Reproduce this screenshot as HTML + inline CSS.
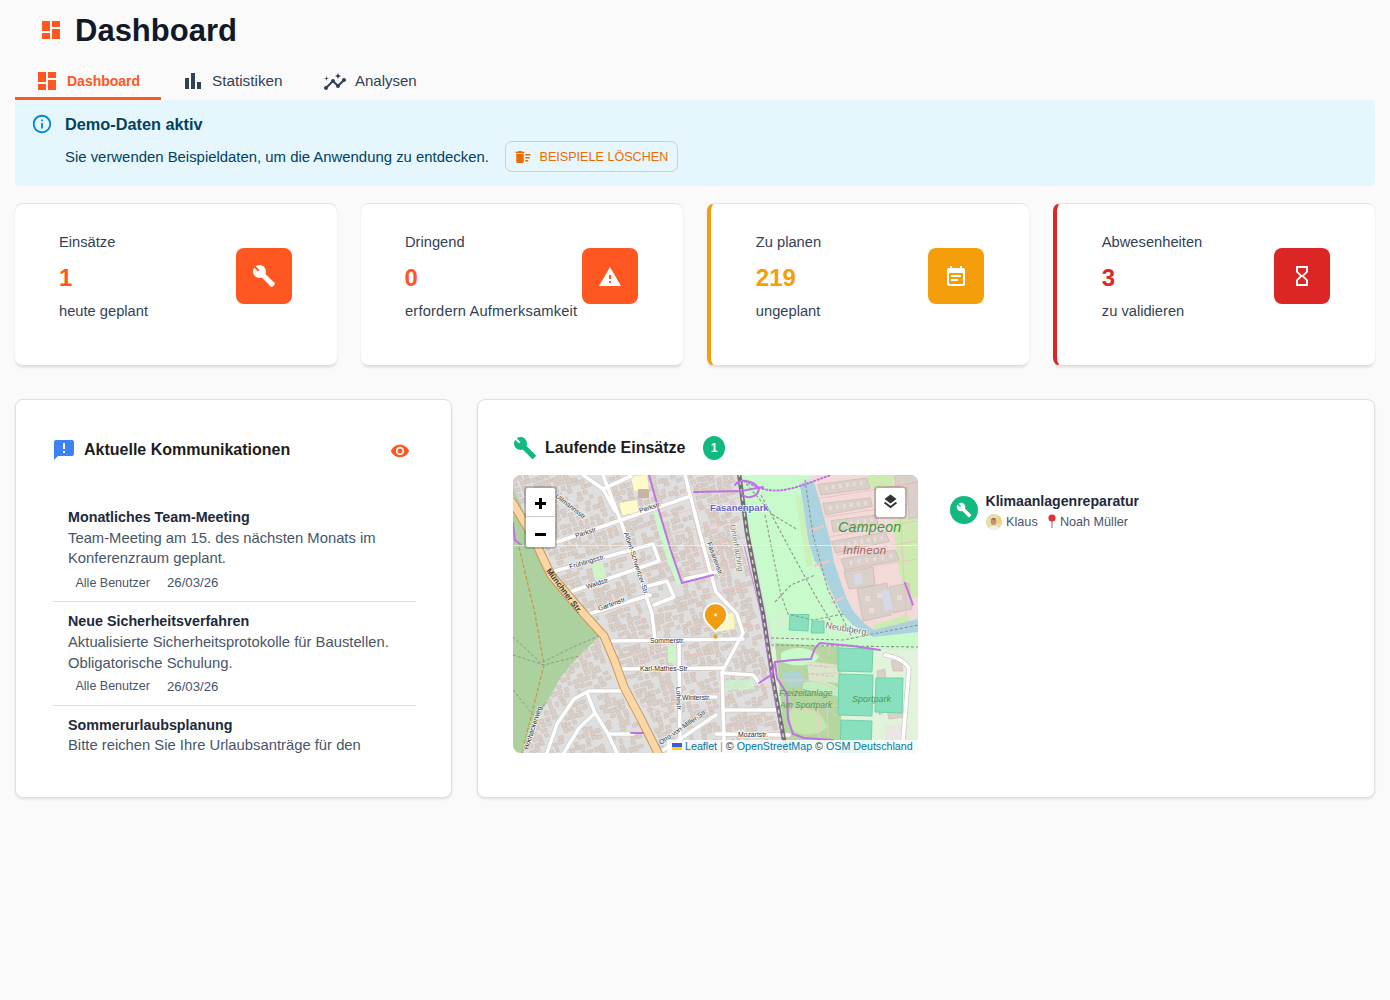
<!DOCTYPE html>
<html><head><meta charset="utf-8">
<style>
*{box-sizing:border-box;margin:0;padding:0}
html,body{width:1390px;height:1000px;overflow:hidden;background:#fafafa;font-family:"Liberation Sans",sans-serif}
.a{position:absolute;white-space:nowrap;line-height:1}
svg{display:block}
.card{position:absolute;background:#fff;border-radius:8px;border-top:1px solid #e2e5ea;border-bottom:1px solid #d9dce1;box-shadow:0 1.5px 2.5px rgba(0,0,0,0.06),0 2px 2px rgba(0,0,0,0.03)}
.card2{position:absolute;background:#fff;border:1px solid #dcdfe4;border-radius:8px;box-shadow:0 1px 3px rgba(0,0,0,0.07),0 2px 2px rgba(0,0,0,0.03)}
.lbl{font-size:14.7px;color:#334155}
.num{font-size:24px;font-weight:bold}
.ibox{position:absolute;width:56px;height:56px;border-radius:8px}
.t14{font-size:14.3px;font-weight:bold;color:#1e293b}
.d14{font-size:14.8px;color:#475569}
.m12{font-size:12.5px;color:#475569}
</style></head>
<body>
<!-- HEADER -->
<svg class="a" style="left:39px;top:18px" width="24" height="24" viewBox="0 0 24 24"><path fill="#ff5722" d="M3 13h8V3H3zm0 8h8v-6H3zm10 0h8V11h-8zm0-18v6h8V3z"/></svg>
<div class="a" style="left:75px;top:14.8px;font-size:31px;font-weight:bold;color:#111827">Dashboard</div>

<!-- TABS -->
<svg class="a" style="left:35px;top:69px" width="24" height="24" viewBox="0 0 24 24"><path fill="#ff5722" d="M3 13h8V3H3zm0 8h8v-6H3zm10 0h8V11h-8zm0-18v6h8V3z"/></svg>
<div class="a" style="left:67px;top:74px;font-size:14px;font-weight:bold;color:#ff5722">Dashboard</div>
<div class="a" style="left:15px;top:97px;width:146px;height:3px;background:#ff5722"></div>
<svg class="a" style="left:181px;top:69px" width="24" height="24" viewBox="0 0 24 24"><path fill="#334155" d="M4 9h4v11H4zm12 4h4v7h-4zm-6-9h4v16h-4z"/></svg>
<div class="a" style="left:212px;top:72.7px;font-size:15.3px;color:#334155">Statistiken</div>
<svg class="a" style="left:323px;top:69.5px" width="24" height="24" viewBox="0 0 24 24"><path fill="#334155" d="M21 8c-1.45 0-2.26 1.44-1.93 2.51l-3.55 3.56c-.3-.09-.74-.09-1.04 0l-2.55-2.55C12.27 10.45 11.46 9 10 9c-1.45 0-2.27 1.44-1.93 2.52l-4.56 4.55C2.44 15.74 1 16.55 1 18c0 1.1.9 2 2 2 1.45 0 2.26-1.44 1.93-2.51l4.55-4.56c.3.09.74.09 1.04 0l2.55 2.55C12.73 16.55 13.54 18 15 18c1.45 0 2.27-1.44 1.93-2.52l3.56-3.55c1.07.33 2.51-.48 2.51-1.93 0-1.1-.9-2-2-2"/><path fill="#334155" d="m15 9 .94-2.07L18 6l-2.06-.93L15 3l-.92 2.07L12 6l2.08.93zM3.5 11 4 9l2-.5L4 8l-.5-2L3 8l-2 .5L3 9z"/></svg>
<div class="a" style="left:355px;top:72.8px;font-size:15px;color:#334155">Analysen</div>

<!-- ALERT -->
<div class="a" style="left:15px;top:100px;width:1360px;height:86px;background:#e5f6fd;border-radius:4px"></div>
<svg class="a" style="left:31px;top:113px" width="22" height="22" viewBox="0 0 24 24"><path fill="#0288d1" d="M11 7h2v2h-2zm0 4h2v6h-2zm1-9C6.48 2 2 6.48 2 12s4.48 10 10 10 10-4.48 10-10S17.52 2 12 2m0 18c-4.41 0-8-3.59-8-8s3.59-8 8-8 8 3.59 8 8-3.59 8-8 8"/></svg>
<div class="a" style="left:65px;top:116px;font-size:16.3px;font-weight:bold;color:#014361">Demo-Daten aktiv</div>
<div class="a" style="left:65px;top:150px;font-size:14.9px;color:#014361">Sie verwenden Beispieldaten, um die Anwendung zu entdecken.</div>
<div class="a" style="left:505.2px;top:141.4px;width:172.6px;height:31px;border:1.2px solid rgba(237,108,2,0.33);border-radius:7px"></div>
<svg class="a" style="left:513.5px;top:148px" width="18" height="18" viewBox="0 0 24 24"><path fill="#ed6c02" d="M15 16h4v2h-4zm0-8h7v2h-7zm0 4h6v2h-6zM3 18c0 1.1.9 2 2 2h6c1.1 0 2-.9 2-2V8H3zM14 5h-3l-1-1H6L5 5H2v2h12z"/></svg>
<div class="a" style="left:539.5px;top:150.8px;font-size:12.6px;color:#ed6c02">BEISPIELE LÖSCHEN</div>

<!-- STAT CARDS -->
<div class="card" style="left:15px;top:203px;width:322px;height:163px"></div>
<div class="a lbl" style="left:59px;top:234.5px">Einsätze</div>
<div class="a num" style="left:59px;top:266.4px;color:#ff5722">1</div>
<div class="a lbl" style="left:59px;top:304px">heute geplant</div>
<div class="ibox" style="left:236px;top:248.4px;background:#ff5722"></div>

<div class="card" style="left:361px;top:203px;width:322px;height:163px"></div>
<div class="a lbl" style="left:405px;top:234.5px">Dringend</div>
<div class="a num" style="left:404.5px;top:266.4px;color:#ff5722">0</div>
<div class="a lbl" style="left:405px;top:304px;letter-spacing:0.17px">erfordern Aufmerksamkeit</div>
<div class="ibox" style="left:582px;top:248.4px;background:#ff5722"></div>

<div class="card" style="left:707px;top:203px;width:322px;height:163px;border-left:4px solid #f59e0b"></div>
<div class="a lbl" style="left:755.8px;top:234.5px">Zu planen</div>
<div class="a num" style="left:755.8px;top:266.4px;color:#f59e0b">219</div>
<div class="a lbl" style="left:755.8px;top:304px">ungeplant</div>
<div class="ibox" style="left:928px;top:248.4px;background:#f59e0b"></div>

<div class="card" style="left:1053px;top:203px;width:322px;height:163px;border-left:4px solid #dc2626"></div>
<div class="a lbl" style="left:1101.8px;top:234.5px">Abwesenheiten</div>
<div class="a num" style="left:1101.8px;top:266.4px;color:#dc2626">3</div>
<div class="a lbl" style="left:1101.8px;top:304px">zu validieren</div>
<div class="ibox" style="left:1274px;top:248.4px;background:#dc2626"></div>

<!-- stat icons -->
<svg class="a" style="left:252px;top:264.4px" width="24" height="24" viewBox="0 0 24 24"><path fill="#fff" d="m22.61 18.99-9.08-9.08c.93-2.34.45-5.1-1.44-7C9.79.61 6.21.4 3.66 2.26L7.5 6.11 6.08 7.52 2.25 3.69C.39 6.23.6 9.82 2.9 12.11c1.86 1.86 4.57 2.35 6.89 1.48l9.11 9.11c.39.39 1.02.39 1.41 0l2.3-2.3c.4-.38.4-1.01 0-1.41"/></svg>
<svg class="a" style="left:598px;top:265.4px" width="24" height="24" viewBox="0 0 24 24"><path fill="#fff" d="M1 21h22L12 2zm12-3h-2v-2h2zm0-4h-2v-4h2z"/></svg>
<svg class="a" style="left:943.6px;top:264.6px" width="24" height="24" viewBox="0 0 24 24"><path fill="#fff" d="M17 10H7v2h10zm2-7h-1V1h-2v2H8V1H6v2H5c-1.11 0-1.99.9-1.99 2L3 19c0 1.1.89 2 2 2h14c1.1 0 2-.9 2-2V5c0-1.1-.9-2-2-2m0 16H5V8h14zm-5-5H7v2h7z"/></svg>
<svg class="a" style="left:1290px;top:264.4px" width="24" height="24" viewBox="0 0 24 24"><path fill="#fff" d="M6 2v6h.01L6 8.01 10 12l-4 4 .01.01H6V22h12v-5.99h-.01L18 16l-4-4 4-3.99-.01-.01H18V2zm10 14.5V20H8v-3.5l4-4zm-4-5-4-4V4h8v3.5z"/></svg>

<!-- COMMUNICATIONS CARD -->
<div class="card2" style="left:15px;top:399px;width:437px;height:399px"></div>
<svg class="a" style="left:52px;top:438px" width="24" height="24" viewBox="0 0 24 24"><path fill="#3b82f6" d="M20 2H4c-1.1 0-1.99.9-1.99 2L2 22l4-4h14c1.1 0 2-.9 2-2V4c0-1.1-.9-2-2-2m-7 9h-2V5h2zm0 4h-2v-2h2z"/></svg>
<div class="a" style="left:84px;top:442px;font-size:16px;font-weight:bold;color:#1c1c1c">Aktuelle Kommunikationen</div>
<svg class="a" style="left:390.4px;top:440.9px" width="20" height="20" viewBox="0 0 24 24"><path fill="#ff5722" d="M12 4.5C7 4.5 2.73 7.61 1 12c1.73 4.39 6 7.5 11 7.5s9.27-3.11 11-7.5c-1.73-4.39-6-7.5-11-7.5M12 17c-2.76 0-5-2.24-5-5s2.24-5 5-5 5 2.24 5 5-2.24 5-5 5m0-8c-1.66 0-3 1.34-3 3s1.34 3 3 3 3-1.34 3-3-1.34-3-3-3"/></svg>

<div class="a t14" style="left:68px;top:510px">Monatliches Team-Meeting</div>
<div class="a d14" style="left:68px;top:530.6px">Team-Meeting am 15. des nächsten Monats im</div>
<div class="a d14" style="left:68px;top:551.4px">Konferenzraum geplant.</div>
<div class="a m12" style="left:75.5px;top:576.7px">Alle Benutzer</div>
<div class="a m12" style="left:167px;top:576.2px;font-size:13.2px">26/03/26</div>
<div class="a" style="left:52px;top:601px;width:364px;height:1px;background:#e0e0e0"></div>

<div class="a t14" style="left:68px;top:614.2px">Neue Sicherheitsverfahren</div>
<div class="a d14" style="left:68px;top:635.1px">Aktualisierte Sicherheitsprotokolle für Baustellen.</div>
<div class="a d14" style="left:68px;top:655.6px">Obligatorische Schulung.</div>
<div class="a m12" style="left:75.5px;top:680.4px">Alle Benutzer</div>
<div class="a m12" style="left:167px;top:679.9px;font-size:13.2px">26/03/26</div>
<div class="a" style="left:52px;top:705px;width:364px;height:1px;background:#e0e0e0"></div>

<div class="a t14" style="left:68px;top:718px">Sommerurlaubsplanung</div>
<div class="a d14" style="left:68px;top:738.4px">Bitte reichen Sie Ihre Urlaubsanträge für den</div>

<!-- RUNNING JOBS CARD -->
<div class="card2" style="left:477px;top:399px;width:898px;height:399px"></div>
<svg class="a" style="left:513.2px;top:435.7px" width="24" height="24" viewBox="0 0 24 24"><path fill="#10b981" d="m22.61 18.99-9.08-9.08c.93-2.34.45-5.1-1.44-7C9.79.61 6.21.4 3.66 2.26L7.5 6.11 6.08 7.52 2.25 3.69C.39 6.23.6 9.82 2.9 12.11c1.86 1.86 4.57 2.35 6.89 1.48l9.11 9.11c.39.39 1.02.39 1.41 0l2.3-2.3c.4-.38.4-1.01 0-1.41"/></svg>
<div class="a" style="left:545px;top:439.5px;font-size:16px;font-weight:bold;color:#1c1c1c">Laufende Einsätze</div>
<div class="a" style="left:703px;top:435.5px;width:22px;height:24px;border-radius:11px/12px;background:#10b981;color:#fff;font-size:12px;font-weight:bold;text-align:center;line-height:24px">1</div>

<div id="map" class="a" style="left:513px;top:475px;width:405px;height:278px;border-radius:8px;overflow:hidden;background:#e0dfdf">
<svg width="405" height="278" viewBox="0 0 405 278" style="position:absolute;left:0;top:0">
<rect width="405" height="278" fill="#e0dfdf"/>
<path d="M299.0 0.0 L405.0 0.0 L405.0 144.0 L361.0 155.0 L352.0 149.0 L333.0 122.0 L326.0 102.0 L320.5 85.5 L317.4 66.5 L312.2 47.5 L307.4 28.5 L300.5 5.8 Z" fill="#f2dad9"/>
<path d="M354 0 L380 0 L380 10 L357 13 Z" fill="#cdebb0"/>
<path d="M380 46 L405 40 L405 122 L394 124 L386 96 Z" fill="#cdebb0"/>
<path d="M361 150 L395 139 L398 151 L362 159 Z" fill="#cdebb0"/>
<path d="M305 9.5 L353.5 2.9 L357 13.3 L308 20 Z" fill="#d9d0c9" stroke="#c9b8b0" stroke-width="0.7"/>
<path d="M309.8 28.5 L357.3 22.8 L359.2 31.4 L312.7 40 Z" fill="#d9d0c9" stroke="#c9b8b0" stroke-width="0.7"/>
<path d="M318.4 45.6 L363 40 L365 49.4 L320 57 Z" fill="#d9d0c9" stroke="#c9b8b0" stroke-width="0.7"/>
<path d="M318.4 66.5 L372.5 57 L376.4 66.5 L323 78 Z" fill="#d9d0c9" stroke="#c9b8b0" stroke-width="0.7"/>
<path d="M328 84 L382 75 L386 85 L332 95 Z" fill="#d9d0c9" stroke="#c9b8b0" stroke-width="0.7"/>
<path d="M331 97 L360 92 L362 110 L336 114 Z" fill="#d9d0c9" stroke="#c9b8b0" stroke-width="0.7"/>
<path d="M344 114 L374 108 L378 140 L350 146 Z" fill="#d9d0c9" stroke="#c9b8b0" stroke-width="0.7"/>
<path d="M376 112 L396 108 L399 134 L380 138 Z" fill="#d9d0c9" stroke="#c9b8b0" stroke-width="0.7"/>
<path d="M381 0 L405 0 L405 8 L383 11 Z" fill="#d9d0c9" stroke="#c9b8b0" stroke-width="0.7"/>
<path d="M394 9 L405 7 L405 42 L396 44 Z" fill="#d9d0c9" stroke="#c9b8b0" stroke-width="0.7"/>
<g fill="#f2dad9"><rect x="312.3" y="11.0" width="2.4" height="4" transform="rotate(-10 313.5 13.5)"/><rect x="319.3" y="10.0" width="2.4" height="4" transform="rotate(-10 320.5 12.5)"/><rect x="326.3" y="9.0" width="2.4" height="4" transform="rotate(-10 327.5 11.5)"/><rect x="333.3" y="8.0" width="2.4" height="4" transform="rotate(-10 334.5 10.5)"/><rect x="340.3" y="7.0" width="2.4" height="4" transform="rotate(-10 341.5 9.5)"/><rect x="347.3" y="6.0" width="2.4" height="4" transform="rotate(-10 348.5 8.5)"/><rect x="316.3" y="31.0" width="2.4" height="4" transform="rotate(-10 317.5 33.5)"/><rect x="323.3" y="30.0" width="2.4" height="4" transform="rotate(-10 324.5 32.5)"/><rect x="330.3" y="29.0" width="2.4" height="4" transform="rotate(-10 331.5 31.5)"/><rect x="337.3" y="28.0" width="2.4" height="4" transform="rotate(-10 338.5 30.5)"/><rect x="344.3" y="27.0" width="2.4" height="4" transform="rotate(-10 345.5 29.5)"/><rect x="351.3" y="26.0" width="2.4" height="4" transform="rotate(-10 352.5 28.5)"/><rect x="324.1" y="48.0" width="2.4" height="4" transform="rotate(-10 325.3 50.5)"/><rect x="330.8" y="47.0" width="2.4" height="4" transform="rotate(-10 332.0 49.5)"/><rect x="337.5" y="46.0" width="2.4" height="4" transform="rotate(-10 338.7 48.5)"/><rect x="344.1" y="45.0" width="2.4" height="4" transform="rotate(-10 345.3 47.5)"/><rect x="350.8" y="44.0" width="2.4" height="4" transform="rotate(-10 352.0 46.5)"/><rect x="357.5" y="43.0" width="2.4" height="4" transform="rotate(-10 358.7 45.5)"/><rect x="328.1" y="67.9" width="2.4" height="4" transform="rotate(-10 329.3 70.4)"/><rect x="334.7" y="66.8" width="2.4" height="4" transform="rotate(-10 335.9 69.3)"/><rect x="341.2" y="65.6" width="2.4" height="4" transform="rotate(-10 342.4 68.1)"/><rect x="347.8" y="64.5" width="2.4" height="4" transform="rotate(-10 349.0 67.0)"/><rect x="354.4" y="63.4" width="2.4" height="4" transform="rotate(-10 355.6 65.9)"/><rect x="360.9" y="62.2" width="2.4" height="4" transform="rotate(-10 362.1 64.7)"/><rect x="367.5" y="61.1" width="2.4" height="4" transform="rotate(-10 368.7 63.6)"/><rect x="336.8" y="85.8" width="2.4" height="4" transform="rotate(-10 338.0 88.3)"/><rect x="344.8" y="84.5" width="2.4" height="4" transform="rotate(-10 346.0 87.0)"/><rect x="352.8" y="83.2" width="2.4" height="4" transform="rotate(-10 354.0 85.7)"/><rect x="360.8" y="81.8" width="2.4" height="4" transform="rotate(-10 362.0 84.3)"/><rect x="368.8" y="80.5" width="2.4" height="4" transform="rotate(-10 370.0 83.0)"/><rect x="376.8" y="79.2" width="2.4" height="4" transform="rotate(-10 378.0 81.7)"/></g>
<g fill="#f2dad9"><rect x="352" y="121" width="5" height="5"/><rect x="364" y="118" width="5" height="5"/><rect x="356" y="133" width="5" height="5"/><rect x="384" y="120" width="5" height="5"/></g>
<path d="M340 100 L348 98 L350 108 L342 110 Z M368 116 L376 114 L380 134 L372 136 Z" fill="#d8d9e6"/>
<g stroke="#ecbcba" stroke-width="0.8" fill="none"><path d="M303 24 L400 8 M308 43 L402 28 M316 62 L404 46 M324 80 L404 66 M330 96 L404 84 M385 0 L393 140"/></g>
<path d="M0.0 12.0 L12.0 40.0 L30.0 80.0 L48.0 108.0 L66.0 130.0 L84.0 152.0 L88.0 160.0 L66.0 181.0 L48.0 202.0 L34.0 227.0 L19.0 256.0 L10.0 278.0 L0.0 278.0 Z" fill="#add19e"/>
<path d="M229.0 0.0 L300.0 0.0 L287.0 9.0 L295.0 44.0 L304.0 88.0 L320.0 125.0 L340.0 150.0 L360.0 162.0 L405.0 157.0 L405.0 175.0 L262.0 172.0 L254.0 139.0 L237.0 58.0 Z" fill="#c8facc"/>
<path d="M282 20 L289 22 L300 90 L294 92 Z" fill="#cdebb0" opacity="0.7"/>
<path d="M286.7 8.8 L300.5 5.8 L307.4 28.5 L312.2 47.5 L317.4 66.5 L320.5 85.5 L326.0 102.0 L333.0 122.0 L340.0 136.0 L352.0 149.0 L361.0 155.0 L405.0 144.0 L405.0 157.0 L360.0 162.0 L340.0 150.0 L329.0 139.0 L319.0 118.0 L307.0 92.0 L301.3 85.5 L295.6 66.5 L292.7 47.5 L290.0 28.5 Z" fill="#aad3df"/>
<path d="M296 56 L311 51 M301 91 L316 86 M318 128 L331 122" stroke="#f2c6c4" stroke-width="2"/>
<path d="M258 172 L405 175 L405 278 L272 278 Z" fill="#e2f3dc"/>
<path d="M262 168 L328 172 L328 266 L272 270 Z" fill="#b5d6a1"/>
<path d="M268 178 C280 170 300 172 306 182 C300 192 278 193 268 186 Z" fill="#c8facc"/>
<path d="M270 198 C282 194 290 196 292 206 C288 214 274 214 270 205 Z" fill="#aad3df" opacity="0.8"/>
<path d="M276 236 C292 228 310 236 314 252 C305 262 284 262 278 252 Z" fill="#c8e8b0" opacity="0.9"/>
<path d="M290 208 C300 204 318 206 326 214 L326 222 C314 218 300 216 290 214 Z" fill="#c8facc" opacity="0.7"/>
<path d="M294 186 L326 190 L326 208 L296 206 Z" fill="#d9e6c9"/>
<g stroke="#f0c8c6" stroke-width="1" fill="none"><path d="M262 205 L290 205 C305 206 318 212 326 216"/><path d="M276 232 C290 236 300 238 305 232 L326 230"/><path d="M305 232 L306 263 M314 231 L315 263 M320 240 L326 240 M295 199 L328 198 M300 191 L326 192"/><path d="M300 172 C306 176 306 182 310 186 M318 168 L315 180"/></g>
<g fill="#e3c9c6"><rect x="296" y="189" width="3" height="2"/><rect x="301" y="190" width="3" height="2"/><rect x="306" y="190" width="3" height="2"/><rect x="311" y="191" width="3" height="2"/><rect x="298" y="198" width="3" height="2"/><rect x="303" y="199" width="3" height="2"/><rect x="308" y="199" width="3" height="2"/><rect x="313" y="200" width="3" height="2"/><rect x="318" y="200" width="3" height="2"/></g>
<path d="M364 196 L372 194 L374 236 L366 240 Z M374 236 L392 234 L392 242 L376 244 Z M378 186 L388 184 L390 196 L380 196 Z" fill="#d9d0c9" stroke="#c9b8b0" stroke-width="0.6"/>
<rect x="372" y="250" width="22" height="18" fill="#eae6e2"/>
<g fill="#88e0be" stroke="#6dd3a9" stroke-width="1">
<path d="M277 139.5 L296 139.5 L295 156 L276 155 Z"/>
<path d="M299 146 L311 146 L311 158 L298 158 Z"/>
<path d="M325 173 L360 174 L359 197 L325 196 Z"/>
<path d="M326 199 L360 200 L359 241 L325 240 Z"/>
<path d="M363 203 L390 203 L389 238 L362 237 Z"/>
<path d="M328 245 L359 246 L358 278 L327 278 Z"/>
</g>
<path d="M262 139 L276 140 L275 155 L262 156 Z" fill="#d7f0d0" opacity="0.6"/>
<g fill="#d9d0c9" stroke="#c8b9ae" stroke-width="0.5">
<rect x="-2.6" y="-1.8" width="5.3" height="3.7" transform="translate(17.0 271.4) rotate(-17)"/>
<rect x="-2.2" y="-1.8" width="4.4" height="3.5" transform="translate(19.9 277.1) rotate(-17)"/>
<rect x="-2.8" y="-1.5" width="5.7" height="2.9" transform="translate(20.4 259.1) rotate(-17)"/>
<rect x="-2.0" y="-1.9" width="4.0" height="3.9" transform="translate(21.6 264.4) rotate(-20)"/>
<rect x="-2.4" y="-1.5" width="4.7" height="3.0" transform="translate(24.3 270.1) rotate(-17)"/>
<rect x="-2.0" y="-2.2" width="4.0" height="4.3" transform="translate(24.6 274.2) rotate(-17)"/>
<rect x="-2.6" y="-1.9" width="5.2" height="3.8" transform="translate(24.7 252.2) rotate(73)"/>
<rect x="-2.6" y="-1.8" width="5.3" height="3.5" transform="translate(26.8 262.6) rotate(73)"/>
<rect x="-2.3" y="-2.0" width="4.7" height="3.9" transform="translate(28.9 267.7) rotate(73)"/>
<rect x="-2.5" y="-1.7" width="4.9" height="3.5" transform="translate(28.2 246.0) rotate(-17)"/>
<rect x="-2.0" y="-2.1" width="4.0" height="4.2" transform="translate(30.7 249.9) rotate(-15)"/>
<rect x="-3.0" y="-1.6" width="5.9" height="3.1" transform="translate(31.2 255.6) rotate(-15)"/>
<rect x="-2.0" y="-1.4" width="4.0" height="2.8" transform="translate(33.6 260.4) rotate(-17)"/>
<rect x="-1.9" y="-1.6" width="3.7" height="3.2" transform="translate(38.5 276.7) rotate(-17)"/>
<rect x="-1.9" y="-2.1" width="3.8" height="4.1" transform="translate(33.3 238.1) rotate(73)"/>
<rect x="-2.1" y="-1.4" width="4.3" height="2.9" transform="translate(34.6 243.9) rotate(-22)"/>
<rect x="-3.0" y="-1.7" width="5.9" height="3.4" transform="translate(36.2 248.0) rotate(73)"/>
<rect x="-1.9" y="-1.6" width="3.9" height="3.2" transform="translate(42.3 270.0) rotate(-17)"/>
<rect x="-2.0" y="-1.4" width="4.0" height="2.8" transform="translate(44.5 274.9) rotate(73)"/>
<rect x="-2.7" y="-1.5" width="5.4" height="3.1" transform="translate(35.4 226.4) rotate(-17)"/>
<rect x="-2.7" y="-1.7" width="5.3" height="3.3" transform="translate(37.7 231.3) rotate(73)"/>
<rect x="-2.6" y="-2.0" width="5.2" height="4.0" transform="translate(39.9 236.8) rotate(-17)"/>
<rect x="-2.7" y="-1.6" width="5.4" height="3.3" transform="translate(41.9 241.9) rotate(-17)"/>
<rect x="-2.3" y="-1.6" width="4.7" height="3.2" transform="translate(48.0 262.5) rotate(-17)"/>
<rect x="-2.7" y="-1.9" width="5.4" height="3.8" transform="translate(48.0 266.9) rotate(-20)"/>
<rect x="-2.9" y="-1.9" width="5.9" height="3.9" transform="translate(41.1 219.5) rotate(-17)"/>
<rect x="-2.3" y="-1.4" width="4.6" height="2.9" transform="translate(44.0 229.2) rotate(73)"/>
<rect x="-2.4" y="-2.2" width="4.8" height="4.4" transform="translate(51.0 250.2) rotate(-10)"/>
<rect x="-2.7" y="-2.0" width="5.3" height="3.9" transform="translate(52.6 255.1) rotate(73)"/>
<rect x="-2.2" y="-2.0" width="4.4" height="3.9" transform="translate(59.1 275.9) rotate(-17)"/>
<rect x="-2.2" y="-1.6" width="4.4" height="3.1" transform="translate(45.7 211.9) rotate(-17)"/>
<rect x="-1.9" y="-2.1" width="3.8" height="4.1" transform="translate(47.4 217.1) rotate(-17)"/>
<rect x="-2.1" y="-2.2" width="4.2" height="4.4" transform="translate(47.9 223.0) rotate(-17)"/>
<rect x="-2.9" y="-2.1" width="5.9" height="4.2" transform="translate(50.7 227.6) rotate(73)"/>
<rect x="-2.6" y="-1.7" width="5.2" height="3.4" transform="translate(54.5 243.3) rotate(-17)"/>
<rect x="-2.3" y="-1.4" width="4.5" height="2.8" transform="translate(55.2 249.1) rotate(-17)"/>
<rect x="-2.6" y="-1.4" width="5.2" height="2.9" transform="translate(57.8 253.8) rotate(-17)"/>
<rect x="-1.7" y="-1.9" width="3.5" height="3.7" transform="translate(63.2 269.2) rotate(-11)"/>
<rect x="-1.8" y="-1.7" width="3.6" height="3.3" transform="translate(63.9 273.4) rotate(-13)"/>
<rect x="-2.0" y="-2.0" width="4.0" height="4.0" transform="translate(50.0 205.0) rotate(-17)"/>
<rect x="-1.8" y="-2.0" width="3.6" height="3.9" transform="translate(53.5 214.4) rotate(73)"/>
<rect x="-2.5" y="-1.9" width="4.9" height="3.8" transform="translate(53.9 220.1) rotate(-11)"/>
<rect x="-2.5" y="-2.2" width="4.9" height="4.4" transform="translate(58.3 237.0) rotate(-17)"/>
<rect x="-2.8" y="-1.8" width="5.5" height="3.6" transform="translate(60.8 241.4) rotate(-18)"/>
<rect x="-1.9" y="-1.8" width="3.8" height="3.6" transform="translate(61.6 247.1) rotate(-17)"/>
<rect x="-2.9" y="-1.7" width="5.8" height="3.4" transform="translate(67.6 261.9) rotate(-16)"/>
<rect x="-2.6" y="-2.0" width="5.2" height="3.9" transform="translate(69.4 272.1) rotate(-17)"/>
<rect x="-1.8" y="-2.0" width="3.5" height="4.0" transform="translate(70.7 277.7) rotate(-17)"/>
<rect x="-2.0" y="-1.8" width="3.9" height="3.6" transform="translate(54.8 198.5) rotate(-17)"/>
<rect x="-1.7" y="-1.6" width="3.4" height="3.2" transform="translate(54.9 203.4) rotate(-13)"/>
<rect x="-2.1" y="-1.5" width="4.3" height="2.9" transform="translate(57.0 208.5) rotate(-17)"/>
<rect x="-2.7" y="-1.7" width="5.3" height="3.3" transform="translate(62.6 229.5) rotate(-17)"/>
<rect x="-2.3" y="-2.0" width="4.5" height="4.1" transform="translate(65.7 234.3) rotate(-12)"/>
<rect x="-3.0" y="-2.0" width="6.0" height="3.9" transform="translate(67.0 239.7) rotate(-18)"/>
<rect x="-2.1" y="-1.9" width="4.1" height="3.8" transform="translate(71.8 254.3) rotate(-17)"/>
<rect x="-2.3" y="-2.1" width="4.7" height="4.2" transform="translate(72.7 259.9) rotate(-17)"/>
<rect x="-2.0" y="-1.9" width="4.0" height="3.9" transform="translate(75.2 265.3) rotate(-16)"/>
<rect x="-1.8" y="-1.5" width="3.6" height="3.0" transform="translate(75.9 269.9) rotate(-17)"/>
<rect x="-2.7" y="-1.6" width="5.5" height="3.1" transform="translate(77.1 276.3) rotate(-17)"/>
<rect x="-2.6" y="-1.8" width="5.1" height="3.5" transform="translate(0.7 5.1) rotate(-20)"/>
<rect x="-2.5" y="-1.5" width="5.0" height="3.0" transform="translate(1.9 10.0) rotate(-17)"/>
<rect x="-2.8" y="-1.9" width="5.6" height="3.7" transform="translate(4.1 15.1) rotate(-17)"/>
<rect x="-2.5" y="-1.5" width="4.9" height="3.0" transform="translate(5.8 20.8) rotate(-17)"/>
<rect x="-2.0" y="-1.8" width="4.1" height="3.6" transform="translate(8.8 26.2) rotate(-17)"/>
<rect x="-2.1" y="-1.9" width="4.2" height="3.8" transform="translate(13.5 40.3) rotate(-17)"/>
<rect x="-2.7" y="-1.7" width="5.4" height="3.5" transform="translate(58.8 190.9) rotate(73)"/>
<rect x="-2.3" y="-2.2" width="4.5" height="4.4" transform="translate(59.1 195.7) rotate(73)"/>
<rect x="-2.6" y="-1.8" width="5.2" height="3.6" transform="translate(63.4 206.3) rotate(-17)"/>
<rect x="-2.4" y="-1.7" width="4.8" height="3.4" transform="translate(64.4 211.3) rotate(-17)"/>
<rect x="-1.7" y="-1.7" width="3.4" height="3.4" transform="translate(66.0 217.1) rotate(-17)"/>
<rect x="-2.9" y="-1.6" width="5.9" height="3.1" transform="translate(69.2 227.1) rotate(-17)"/>
<rect x="-2.1" y="-2.1" width="4.3" height="4.1" transform="translate(71.7 232.1) rotate(-17)"/>
<rect x="-1.9" y="-2.1" width="3.8" height="4.1" transform="translate(77.1 253.9) rotate(-17)"/>
<rect x="-2.0" y="-2.0" width="4.1" height="3.9" transform="translate(79.6 258.5) rotate(-17)"/>
<rect x="-2.4" y="-1.8" width="4.8" height="3.6" transform="translate(81.3 262.3) rotate(-17)"/>
<rect x="-2.5" y="-2.1" width="5.1" height="4.2" transform="translate(84.3 274.2) rotate(-17)"/>
<rect x="-1.9" y="-2.0" width="3.8" height="4.1" transform="translate(6.7 2.9) rotate(-18)"/>
<rect x="-2.7" y="-1.7" width="5.5" height="3.3" transform="translate(10.1 7.7) rotate(-17)"/>
<rect x="-1.9" y="-2.0" width="3.8" height="4.1" transform="translate(11.2 13.0) rotate(-17)"/>
<rect x="-2.0" y="-2.0" width="4.0" height="4.0" transform="translate(12.9 18.0) rotate(-17)"/>
<rect x="-2.2" y="-1.9" width="4.3" height="3.8" transform="translate(13.3 24.2) rotate(-17)"/>
<rect x="-2.0" y="-1.9" width="4.0" height="3.9" transform="translate(14.8 29.3) rotate(-17)"/>
<rect x="-1.9" y="-2.0" width="3.7" height="4.0" transform="translate(17.6 33.6) rotate(-17)"/>
<rect x="-1.9" y="-1.6" width="3.8" height="3.2" transform="translate(19.5 39.4) rotate(-17)"/>
<rect x="-1.9" y="-2.1" width="3.9" height="4.3" transform="translate(64.1 190.0) rotate(-17)"/>
<rect x="-2.4" y="-1.5" width="4.9" height="3.0" transform="translate(66.7 200.4) rotate(-23)"/>
<rect x="-2.9" y="-1.8" width="5.7" height="3.7" transform="translate(70.1 204.3) rotate(-17)"/>
<rect x="-2.0" y="-1.6" width="4.0" height="3.3" transform="translate(69.9 210.3) rotate(73)"/>
<rect x="-2.4" y="-2.1" width="4.9" height="4.1" transform="translate(84.7 255.6) rotate(-17)"/>
<rect x="-2.7" y="-1.9" width="5.4" height="3.8" transform="translate(86.5 261.8) rotate(-17)"/>
<rect x="-2.7" y="-1.8" width="5.5" height="3.5" transform="translate(89.3 271.8) rotate(73)"/>
<rect x="-2.4" y="-1.5" width="4.9" height="3.0" transform="translate(90.2 276.8) rotate(-17)"/>
<rect x="-2.2" y="-1.7" width="4.4" height="3.4" transform="translate(13.3 2.3) rotate(73)"/>
<rect x="-2.8" y="-1.7" width="5.5" height="3.4" transform="translate(14.6 6.6) rotate(-14)"/>
<rect x="-2.7" y="-1.6" width="5.4" height="3.3" transform="translate(17.2 17.2) rotate(-17)"/>
<rect x="-1.9" y="-1.6" width="3.8" height="3.2" transform="translate(21.6 26.7) rotate(-16)"/>
<rect x="-2.8" y="-2.2" width="5.6" height="4.4" transform="translate(24.3 32.4) rotate(-17)"/>
<rect x="-2.1" y="-2.1" width="4.2" height="4.2" transform="translate(23.7 37.7) rotate(-17)"/>
<rect x="-2.9" y="-1.7" width="5.7" height="3.4" transform="translate(28.2 48.3) rotate(73)"/>
<rect x="-2.7" y="-1.5" width="5.4" height="3.1" transform="translate(29.6 53.1) rotate(-17)"/>
<rect x="-1.7" y="-2.0" width="3.5" height="4.0" transform="translate(32.5 63.0) rotate(-17)"/>
<rect x="-2.1" y="-1.6" width="4.3" height="3.2" transform="translate(34.5 73.3) rotate(73)"/>
<rect x="-1.9" y="-1.6" width="3.8" height="3.3" transform="translate(38.3 78.8) rotate(-17)"/>
<rect x="-2.7" y="-1.9" width="5.5" height="3.9" transform="translate(67.6 182.2) rotate(73)"/>
<rect x="-2.8" y="-1.9" width="5.7" height="3.9" transform="translate(71.1 187.5) rotate(-17)"/>
<rect x="-2.3" y="-2.1" width="4.5" height="4.2" transform="translate(71.9 192.2) rotate(-17)"/>
<rect x="-2.9" y="-1.8" width="5.8" height="3.6" transform="translate(74.4 197.3) rotate(-16)"/>
<rect x="-1.9" y="-1.8" width="3.8" height="3.6" transform="translate(75.1 202.8) rotate(-17)"/>
<rect x="-2.8" y="-1.5" width="5.7" height="3.0" transform="translate(75.9 208.9) rotate(-17)"/>
<rect x="-2.9" y="-1.9" width="5.7" height="3.8" transform="translate(21.9 4.9) rotate(-17)"/>
<rect x="-2.4" y="-2.1" width="4.8" height="4.1" transform="translate(23.6 10.6) rotate(-17)"/>
<rect x="-2.1" y="-1.9" width="4.2" height="3.8" transform="translate(24.0 15.5) rotate(-17)"/>
<rect x="-2.4" y="-1.7" width="4.8" height="3.3" transform="translate(25.4 19.8) rotate(73)"/>
<rect x="-2.0" y="-2.2" width="4.1" height="4.3" transform="translate(26.7 26.4) rotate(-17)"/>
<rect x="-2.8" y="-2.2" width="5.6" height="4.4" transform="translate(28.3 31.6) rotate(73)"/>
<rect x="-2.2" y="-2.1" width="4.4" height="4.2" transform="translate(29.7 36.4) rotate(73)"/>
<rect x="-2.2" y="-2.2" width="4.5" height="4.4" transform="translate(32.8 40.7) rotate(73)"/>
<rect x="-2.6" y="-1.5" width="5.1" height="3.0" transform="translate(33.7 45.4) rotate(-17)"/>
<rect x="-3.0" y="-2.1" width="6.0" height="4.2" transform="translate(34.3 50.9) rotate(-17)"/>
<rect x="-1.7" y="-1.5" width="3.5" height="3.0" transform="translate(36.3 57.5) rotate(-17)"/>
<rect x="-1.7" y="-1.5" width="3.4" height="3.1" transform="translate(39.7 61.2) rotate(73)"/>
<rect x="-2.0" y="-2.0" width="4.0" height="4.1" transform="translate(43.0 76.8) rotate(-17)"/>
<rect x="-2.4" y="-2.0" width="4.8" height="3.9" transform="translate(45.3 82.5) rotate(-17)"/>
<rect x="-2.8" y="-1.7" width="5.6" height="3.4" transform="translate(47.1 87.8) rotate(-17)"/>
<rect x="-2.9" y="-1.7" width="5.8" height="3.5" transform="translate(51.3 102.2) rotate(-17)"/>
<rect x="-2.1" y="-1.8" width="4.2" height="3.6" transform="translate(52.7 108.0) rotate(73)"/>
<rect x="-2.4" y="-1.8" width="4.7" height="3.6" transform="translate(72.8 175.9) rotate(-17)"/>
<rect x="-3.0" y="-1.5" width="6.0" height="3.0" transform="translate(74.9 180.7) rotate(-24)"/>
<rect x="-2.8" y="-1.7" width="5.6" height="3.4" transform="translate(77.9 190.2) rotate(73)"/>
<rect x="-1.8" y="-2.2" width="3.7" height="4.4" transform="translate(80.9 195.9) rotate(-17)"/>
<rect x="-2.0" y="-2.0" width="4.1" height="4.0" transform="translate(81.0 201.5) rotate(-18)"/>
<rect x="-2.5" y="-2.0" width="5.0" height="4.0" transform="translate(84.0 212.3) rotate(-17)"/>
<rect x="-2.4" y="-1.8" width="4.7" height="3.6" transform="translate(87.3 222.3) rotate(-17)"/>
<rect x="-2.9" y="-1.9" width="5.8" height="3.7" transform="translate(90.1 232.4) rotate(-14)"/>
<rect x="-2.7" y="-1.5" width="5.4" height="2.9" transform="translate(93.3 236.7) rotate(-17)"/>
<rect x="-2.3" y="-1.9" width="4.5" height="3.8" transform="translate(95.4 247.7) rotate(-17)"/>
<rect x="-1.8" y="-1.7" width="3.6" height="3.4" transform="translate(96.5 252.4) rotate(-17)"/>
<rect x="-1.9" y="-1.5" width="3.9" height="3.1" transform="translate(100.8 263.6) rotate(-17)"/>
<rect x="-2.8" y="-1.8" width="5.7" height="3.7" transform="translate(27.7 2.8) rotate(-17)"/>
<rect x="-2.8" y="-2.0" width="5.6" height="3.9" transform="translate(29.5 8.3) rotate(-17)"/>
<rect x="-2.6" y="-1.7" width="5.3" height="3.4" transform="translate(29.4 13.4) rotate(-17)"/>
<rect x="-2.3" y="-1.6" width="4.5" height="3.2" transform="translate(32.8 17.6) rotate(-13)"/>
<rect x="-2.1" y="-1.8" width="4.2" height="3.7" transform="translate(34.0 23.2) rotate(-17)"/>
<rect x="-1.7" y="-2.0" width="3.4" height="4.0" transform="translate(38.3 39.9) rotate(-17)"/>
<rect x="-2.1" y="-2.0" width="4.2" height="3.9" transform="translate(39.4 44.2) rotate(-17)"/>
<rect x="-2.4" y="-1.8" width="4.8" height="3.5" transform="translate(42.2 48.8) rotate(-17)"/>
<rect x="-2.8" y="-1.8" width="5.6" height="3.6" transform="translate(43.2 54.6) rotate(73)"/>
<rect x="-2.0" y="-1.9" width="4.1" height="3.8" transform="translate(43.6 60.3) rotate(-17)"/>
<rect x="-2.1" y="-1.8" width="4.2" height="3.6" transform="translate(49.7 74.6) rotate(-17)"/>
<rect x="-2.8" y="-2.1" width="5.5" height="4.3" transform="translate(50.3 80.7) rotate(-17)"/>
<rect x="-2.2" y="-1.8" width="4.3" height="3.6" transform="translate(55.9 96.0) rotate(-24)"/>
<rect x="-2.5" y="-1.8" width="5.1" height="3.6" transform="translate(56.9 100.8) rotate(-18)"/>
<rect x="-2.5" y="-2.1" width="5.1" height="4.3" transform="translate(58.6 107.1) rotate(-17)"/>
<rect x="-2.0" y="-1.5" width="4.1" height="3.0" transform="translate(60.2 111.9) rotate(73)"/>
<rect x="-2.8" y="-1.6" width="5.6" height="3.2" transform="translate(63.7 121.3) rotate(-17)"/>
<rect x="-2.5" y="-1.9" width="5.1" height="3.8" transform="translate(80.6 173.4) rotate(-15)"/>
<rect x="-1.9" y="-1.4" width="3.8" height="2.9" transform="translate(81.7 179.0) rotate(-17)"/>
<rect x="-1.8" y="-1.7" width="3.5" height="3.4" transform="translate(83.4 182.9) rotate(-17)"/>
<rect x="-3.0" y="-1.8" width="6.0" height="3.7" transform="translate(85.1 194.1) rotate(73)"/>
<rect x="-2.9" y="-2.0" width="5.8" height="4.0" transform="translate(87.8 204.7) rotate(73)"/>
<rect x="-2.6" y="-1.8" width="5.2" height="3.5" transform="translate(90.6 209.5) rotate(-17)"/>
<rect x="-1.8" y="-1.4" width="3.7" height="2.9" transform="translate(93.2 220.5) rotate(-13)"/>
<rect x="-2.9" y="-1.9" width="5.7" height="3.7" transform="translate(94.5 225.1) rotate(-17)"/>
<rect x="-2.4" y="-1.9" width="4.9" height="3.7" transform="translate(95.7 229.8) rotate(-18)"/>
<rect x="-2.6" y="-2.1" width="5.2" height="4.2" transform="translate(99.5 235.6) rotate(-16)"/>
<rect x="-2.3" y="-1.4" width="4.7" height="2.9" transform="translate(99.9 240.9) rotate(-17)"/>
<rect x="-2.1" y="-1.6" width="4.2" height="3.1" transform="translate(107.9 266.1) rotate(73)"/>
<rect x="-1.9" y="-2.0" width="3.8" height="4.0" transform="translate(109.2 272.2) rotate(73)"/>
<rect x="-3.0" y="-1.8" width="5.9" height="3.5" transform="translate(111.0 276.4) rotate(-17)"/>
<rect x="-1.7" y="-1.6" width="3.4" height="3.2" transform="translate(33.8 1.1) rotate(73)"/>
<rect x="-2.5" y="-1.5" width="5.1" height="3.0" transform="translate(35.9 6.2) rotate(-21)"/>
<rect x="-2.2" y="-1.9" width="4.4" height="3.8" transform="translate(35.8 11.7) rotate(73)"/>
<rect x="-2.9" y="-1.4" width="5.8" height="2.8" transform="translate(37.9 16.8) rotate(-17)"/>
<rect x="-2.3" y="-1.7" width="4.5" height="3.3" transform="translate(39.6 21.2) rotate(73)"/>
<rect x="-2.6" y="-1.7" width="5.2" height="3.3" transform="translate(41.5 26.7) rotate(-22)"/>
<rect x="-2.6" y="-2.1" width="5.3" height="4.3" transform="translate(42.7 32.2) rotate(-17)"/>
<rect x="-1.8" y="-1.9" width="3.6" height="3.8" transform="translate(44.0 37.8) rotate(-9)"/>
<rect x="-2.8" y="-1.9" width="5.6" height="3.7" transform="translate(45.3 43.3) rotate(73)"/>
<rect x="-2.5" y="-1.6" width="5.1" height="3.2" transform="translate(49.5 51.9) rotate(-17)"/>
<rect x="-1.9" y="-1.7" width="3.9" height="3.5" transform="translate(51.5 57.6) rotate(-17)"/>
<rect x="-1.8" y="-1.6" width="3.5" height="3.3" transform="translate(52.8 68.0) rotate(-17)"/>
<rect x="-2.5" y="-2.0" width="4.9" height="3.9" transform="translate(55.5 72.6) rotate(73)"/>
<rect x="-2.9" y="-1.9" width="5.9" height="3.7" transform="translate(58.0 78.8) rotate(-17)"/>
<rect x="-2.7" y="-1.5" width="5.3" height="3.1" transform="translate(63.2 98.5) rotate(-17)"/>
<rect x="-1.8" y="-2.0" width="3.7" height="3.9" transform="translate(64.4 104.4) rotate(-17)"/>
<rect x="-2.6" y="-1.8" width="5.1" height="3.6" transform="translate(65.6 109.1) rotate(-17)"/>
<rect x="-1.9" y="-2.0" width="3.7" height="4.1" transform="translate(69.5 119.4) rotate(73)"/>
<rect x="-2.1" y="-1.7" width="4.1" height="3.4" transform="translate(71.7 125.2) rotate(-12)"/>
<rect x="-2.7" y="-2.2" width="5.4" height="4.4" transform="translate(73.2 130.7) rotate(-15)"/>
<rect x="-2.6" y="-1.9" width="5.2" height="3.8" transform="translate(83.0 166.3) rotate(-17)"/>
<rect x="-2.1" y="-1.9" width="4.2" height="3.9" transform="translate(85.3 171.4) rotate(-15)"/>
<rect x="-1.9" y="-1.8" width="3.9" height="3.6" transform="translate(86.1 176.7) rotate(-17)"/>
<rect x="-2.6" y="-1.6" width="5.2" height="3.2" transform="translate(88.7 182.2) rotate(73)"/>
<rect x="-2.1" y="-1.4" width="4.2" height="2.9" transform="translate(89.9 186.5) rotate(-17)"/>
<rect x="-2.3" y="-1.4" width="4.6" height="2.8" transform="translate(92.8 198.1) rotate(-17)"/>
<rect x="-2.8" y="-1.5" width="5.6" height="3.0" transform="translate(95.4 203.0) rotate(-17)"/>
<rect x="-1.7" y="-1.5" width="3.4" height="3.1" transform="translate(100.8 224.1) rotate(-16)"/>
<rect x="-2.8" y="-1.5" width="5.5" height="3.1" transform="translate(102.7 228.1) rotate(-17)"/>
<rect x="-2.6" y="-2.0" width="5.2" height="4.1" transform="translate(105.3 233.0) rotate(-17)"/>
<rect x="-2.9" y="-1.7" width="5.9" height="3.3" transform="translate(105.7 239.2) rotate(73)"/>
<rect x="-1.9" y="-1.7" width="3.8" height="3.3" transform="translate(108.2 243.9) rotate(-17)"/>
<rect x="-2.5" y="-2.1" width="4.9" height="4.2" transform="translate(109.3 248.7) rotate(-17)"/>
<rect x="-2.4" y="-1.9" width="4.9" height="3.8" transform="translate(110.2 253.6) rotate(-17)"/>
<rect x="-2.5" y="-2.0" width="5.0" height="4.0" transform="translate(118.1 274.9) rotate(73)"/>
<rect x="-1.8" y="-2.1" width="3.6" height="4.1" transform="translate(41.3 4.8) rotate(73)"/>
<rect x="-1.8" y="-1.7" width="3.7" height="3.4" transform="translate(43.2 9.2) rotate(-17)"/>
<rect x="-2.5" y="-1.9" width="5.0" height="3.7" transform="translate(43.3 15.0) rotate(73)"/>
<rect x="-3.0" y="-1.8" width="5.9" height="3.6" transform="translate(45.6 20.4) rotate(-17)"/>
<rect x="-2.9" y="-1.8" width="5.9" height="3.7" transform="translate(49.8 36.2) rotate(-17)"/>
<rect x="-2.0" y="-1.6" width="4.0" height="3.2" transform="translate(51.5 40.6) rotate(-17)"/>
<rect x="-2.2" y="-1.4" width="4.5" height="2.8" transform="translate(54.9 50.8) rotate(-20)"/>
<rect x="-2.6" y="-1.6" width="5.2" height="3.2" transform="translate(56.7 55.7) rotate(73)"/>
<rect x="-1.8" y="-2.2" width="3.6" height="4.3" transform="translate(59.7 66.5) rotate(-23)"/>
<rect x="-2.1" y="-1.7" width="4.1" height="3.5" transform="translate(60.3 72.0) rotate(-17)"/>
<rect x="-2.3" y="-1.9" width="4.5" height="3.8" transform="translate(62.0 77.4) rotate(-15)"/>
<rect x="-2.2" y="-1.9" width="4.5" height="3.7" transform="translate(64.4 81.5) rotate(-18)"/>
<rect x="-2.2" y="-1.7" width="4.5" height="3.4" transform="translate(66.9 93.1) rotate(-17)"/>
<rect x="-2.1" y="-1.5" width="4.2" height="3.0" transform="translate(71.0 103.0) rotate(-17)"/>
<rect x="-2.1" y="-1.7" width="4.2" height="3.4" transform="translate(78.8 127.6) rotate(-17)"/>
<rect x="-2.6" y="-1.5" width="5.2" height="3.0" transform="translate(79.5 133.0) rotate(73)"/>
<rect x="-2.8" y="-2.0" width="5.5" height="4.0" transform="translate(83.0 143.7) rotate(-25)"/>
<rect x="-3.0" y="-2.1" width="6.0" height="4.2" transform="translate(107.9 227.1) rotate(-17)"/>
<rect x="-2.2" y="-1.5" width="4.4" height="3.0" transform="translate(109.5 232.3) rotate(-12)"/>
<rect x="-2.0" y="-2.1" width="3.9" height="4.2" transform="translate(112.9 237.1) rotate(-10)"/>
<rect x="-1.8" y="-2.0" width="3.5" height="4.0" transform="translate(114.0 241.0) rotate(-17)"/>
<rect x="-2.6" y="-1.9" width="5.3" height="3.8" transform="translate(114.5 247.2) rotate(73)"/>
<rect x="-2.8" y="-1.5" width="5.5" height="2.9" transform="translate(120.8 262.5) rotate(-17)"/>
<rect x="-1.9" y="-2.0" width="3.8" height="4.0" transform="translate(120.1 267.4) rotate(-11)"/>
<rect x="-2.6" y="-1.8" width="5.2" height="3.6" transform="translate(122.9 273.5) rotate(73)"/>
<rect x="-1.8" y="-1.8" width="3.7" height="3.7" transform="translate(46.0 2.1) rotate(73)"/>
<rect x="-2.6" y="-2.2" width="5.2" height="4.4" transform="translate(48.3 7.1) rotate(-17)"/>
<rect x="-2.1" y="-1.8" width="4.2" height="3.5" transform="translate(50.2 13.4) rotate(73)"/>
<rect x="-1.8" y="-1.4" width="3.7" height="2.8" transform="translate(53.0 23.6) rotate(-20)"/>
<rect x="-2.4" y="-1.9" width="4.8" height="3.8" transform="translate(57.3 32.7) rotate(-17)"/>
<rect x="-2.3" y="-1.6" width="4.6" height="3.1" transform="translate(57.3 39.6) rotate(-17)"/>
<rect x="-2.2" y="-1.9" width="4.4" height="3.8" transform="translate(59.2 44.7) rotate(-17)"/>
<rect x="-2.1" y="-1.6" width="4.1" height="3.1" transform="translate(61.5 49.2) rotate(-17)"/>
<rect x="-2.5" y="-1.4" width="4.9" height="2.9" transform="translate(63.5 54.0) rotate(-17)"/>
<rect x="-2.7" y="-1.4" width="5.5" height="2.8" transform="translate(64.8 64.3) rotate(-17)"/>
<rect x="-2.7" y="-1.8" width="5.4" height="3.6" transform="translate(67.1 69.3) rotate(73)"/>
<rect x="-2.4" y="-1.6" width="4.8" height="3.2" transform="translate(69.7 80.8) rotate(-17)"/>
<rect x="-3.0" y="-1.7" width="6.0" height="3.4" transform="translate(76.6 95.9) rotate(-11)"/>
<rect x="-2.6" y="-2.0" width="5.3" height="4.0" transform="translate(77.0 100.9) rotate(-14)"/>
<rect x="-2.6" y="-1.6" width="5.2" height="3.1" transform="translate(79.3 105.6) rotate(-16)"/>
<rect x="-2.2" y="-1.8" width="4.4" height="3.5" transform="translate(82.8 115.9) rotate(-17)"/>
<rect x="-2.1" y="-1.7" width="4.3" height="3.3" transform="translate(83.7 120.8) rotate(-17)"/>
<rect x="-2.0" y="-1.6" width="4.0" height="3.2" transform="translate(84.6 126.2) rotate(-17)"/>
<rect x="-2.2" y="-1.8" width="4.4" height="3.7" transform="translate(86.8 130.8) rotate(-17)"/>
<rect x="-2.6" y="-1.9" width="5.3" height="3.7" transform="translate(122.0 250.1) rotate(-24)"/>
<rect x="-2.1" y="-2.0" width="4.2" height="4.0" transform="translate(126.0 261.2) rotate(-14)"/>
<rect x="-2.3" y="-1.5" width="4.7" height="3.0" transform="translate(127.8 271.1) rotate(-17)"/>
<rect x="-2.4" y="-1.9" width="4.9" height="3.8" transform="translate(52.8 1.6) rotate(-17)"/>
<rect x="-2.8" y="-2.0" width="5.6" height="4.0" transform="translate(55.7 5.8) rotate(-17)"/>
<rect x="-1.8" y="-1.8" width="3.6" height="3.5" transform="translate(56.0 10.5) rotate(-17)"/>
<rect x="-2.2" y="-2.1" width="4.3" height="4.3" transform="translate(56.5 15.9) rotate(-17)"/>
<rect x="-3.0" y="-1.8" width="6.0" height="3.7" transform="translate(62.1 32.3) rotate(-17)"/>
<rect x="-2.0" y="-1.7" width="3.9" height="3.5" transform="translate(62.9 37.3) rotate(-10)"/>
<rect x="-2.1" y="-1.6" width="4.3" height="3.3" transform="translate(65.9 42.2) rotate(-17)"/>
<rect x="-1.8" y="-1.7" width="3.7" height="3.4" transform="translate(67.8 47.6) rotate(73)"/>
<rect x="-1.9" y="-1.7" width="3.7" height="3.5" transform="translate(69.1 51.6) rotate(-17)"/>
<rect x="-2.7" y="-2.0" width="5.3" height="4.0" transform="translate(73.2 68.7) rotate(-17)"/>
<rect x="-2.0" y="-2.1" width="4.0" height="4.2" transform="translate(74.8 73.8) rotate(-17)"/>
<rect x="-2.1" y="-1.5" width="4.2" height="3.1" transform="translate(76.2 78.0) rotate(-17)"/>
<rect x="-2.7" y="-1.8" width="5.4" height="3.6" transform="translate(80.8 94.3) rotate(-17)"/>
<rect x="-2.3" y="-1.6" width="4.6" height="3.1" transform="translate(84.0 98.4) rotate(-23)"/>
<rect x="-3.0" y="-1.4" width="6.0" height="2.9" transform="translate(88.7 114.5) rotate(-17)"/>
<rect x="-2.9" y="-1.8" width="5.8" height="3.6" transform="translate(88.5 119.6) rotate(-17)"/>
<rect x="-3.0" y="-1.9" width="5.9" height="3.8" transform="translate(89.9 124.8) rotate(-16)"/>
<rect x="-2.1" y="-1.5" width="4.2" height="3.0" transform="translate(92.1 129.5) rotate(-17)"/>
<rect x="-2.9" y="-1.6" width="5.7" height="3.1" transform="translate(95.5 140.7) rotate(-17)"/>
<rect x="-2.9" y="-1.8" width="5.8" height="3.5" transform="translate(98.1 145.3) rotate(-17)"/>
<rect x="-1.7" y="-2.0" width="3.5" height="4.0" transform="translate(98.0 151.4) rotate(-17)"/>
<rect x="-1.8" y="-1.6" width="3.6" height="3.3" transform="translate(100.2 154.9) rotate(-17)"/>
<rect x="-1.8" y="-1.9" width="3.6" height="3.8" transform="translate(104.5 172.0) rotate(-17)"/>
<rect x="-2.1" y="-1.7" width="4.1" height="3.4" transform="translate(107.7 176.5) rotate(73)"/>
<rect x="-2.8" y="-1.6" width="5.5" height="3.1" transform="translate(108.4 181.4) rotate(-17)"/>
<rect x="-2.7" y="-1.4" width="5.3" height="2.8" transform="translate(109.5 187.4) rotate(-17)"/>
<rect x="-2.5" y="-1.6" width="5.0" height="3.2" transform="translate(113.4 202.2) rotate(-24)"/>
<rect x="-2.5" y="-1.5" width="5.0" height="3.1" transform="translate(61.3 4.6) rotate(-11)"/>
<rect x="-2.9" y="-1.6" width="5.7" height="3.2" transform="translate(62.3 8.4) rotate(-17)"/>
<rect x="-1.9" y="-1.7" width="3.9" height="3.4" transform="translate(66.1 19.2) rotate(-17)"/>
<rect x="-2.8" y="-1.7" width="5.7" height="3.3" transform="translate(67.0 24.2) rotate(-17)"/>
<rect x="-1.8" y="-1.5" width="3.6" height="3.0" transform="translate(73.5 46.1) rotate(73)"/>
<rect x="-2.1" y="-1.6" width="4.2" height="3.3" transform="translate(74.5 51.4) rotate(73)"/>
<rect x="-2.2" y="-1.6" width="4.4" height="3.2" transform="translate(77.1 61.8) rotate(73)"/>
<rect x="-2.9" y="-2.0" width="5.9" height="3.9" transform="translate(80.4 71.7) rotate(73)"/>
<rect x="-2.9" y="-1.8" width="5.7" height="3.6" transform="translate(82.8 76.7) rotate(-17)"/>
<rect x="-2.4" y="-1.9" width="4.8" height="3.9" transform="translate(87.0 92.0) rotate(-9)"/>
<rect x="-3.0" y="-1.5" width="5.9" height="2.9" transform="translate(89.2 97.5) rotate(-17)"/>
<rect x="-2.5" y="-1.9" width="5.1" height="3.7" transform="translate(93.6 112.6) rotate(-17)"/>
<rect x="-2.5" y="-1.6" width="5.0" height="3.1" transform="translate(96.5 117.8) rotate(-23)"/>
<rect x="-2.5" y="-2.0" width="5.1" height="3.9" transform="translate(95.7 122.6) rotate(-17)"/>
<rect x="-2.2" y="-1.9" width="4.3" height="3.8" transform="translate(98.3 127.3) rotate(73)"/>
<rect x="-2.2" y="-2.0" width="4.3" height="4.0" transform="translate(101.2 138.7) rotate(-15)"/>
<rect x="-3.0" y="-1.7" width="5.9" height="3.4" transform="translate(103.2 143.7) rotate(73)"/>
<rect x="-3.0" y="-1.5" width="5.9" height="3.1" transform="translate(104.4 149.4) rotate(-17)"/>
<rect x="-2.8" y="-2.1" width="5.6" height="4.1" transform="translate(106.6 153.2) rotate(-19)"/>
<rect x="-2.2" y="-1.6" width="4.4" height="3.3" transform="translate(107.6 159.8) rotate(-12)"/>
<rect x="-2.8" y="-1.5" width="5.7" height="3.0" transform="translate(113.6 173.8) rotate(-14)"/>
<rect x="-2.8" y="-1.4" width="5.5" height="2.8" transform="translate(113.4 180.2) rotate(-17)"/>
<rect x="-2.6" y="-1.6" width="5.1" height="3.2" transform="translate(116.0 185.4) rotate(-17)"/>
<rect x="-2.6" y="-2.1" width="5.2" height="4.3" transform="translate(117.2 190.6) rotate(-17)"/>
<rect x="-2.7" y="-1.6" width="5.5" height="3.1" transform="translate(119.6 201.4) rotate(-16)"/>
<rect x="-2.5" y="-1.6" width="5.0" height="3.2" transform="translate(122.8 211.4) rotate(-17)"/>
<rect x="-2.8" y="-1.6" width="5.6" height="3.2" transform="translate(124.9 216.6) rotate(-17)"/>
<rect x="-2.7" y="-1.7" width="5.3" height="3.4" transform="translate(126.5 220.7) rotate(-17)"/>
<rect x="-2.1" y="-1.7" width="4.1" height="3.5" transform="translate(129.4 226.0) rotate(73)"/>
<rect x="-2.4" y="-1.8" width="4.9" height="3.6" transform="translate(68.4 6.7) rotate(-17)"/>
<rect x="-1.9" y="-2.1" width="3.7" height="4.1" transform="translate(70.4 11.6) rotate(-17)"/>
<rect x="-2.0" y="-1.8" width="4.0" height="3.7" transform="translate(72.2 17.2) rotate(-17)"/>
<rect x="-2.3" y="-1.8" width="4.6" height="3.6" transform="translate(75.0 28.0) rotate(-25)"/>
<rect x="-2.1" y="-1.8" width="4.1" height="3.6" transform="translate(75.1 33.9) rotate(-22)"/>
<rect x="-1.8" y="-1.7" width="3.6" height="3.5" transform="translate(79.4 43.4) rotate(73)"/>
<rect x="-1.8" y="-1.5" width="3.5" height="3.0" transform="translate(79.6 48.7) rotate(-17)"/>
<rect x="-2.2" y="-2.1" width="4.3" height="4.1" transform="translate(83.5 59.2) rotate(-18)"/>
<rect x="-2.7" y="-2.0" width="5.3" height="4.0" transform="translate(84.8 64.8) rotate(-10)"/>
<rect x="-2.4" y="-1.9" width="4.7" height="3.8" transform="translate(86.8 69.8) rotate(73)"/>
<rect x="-1.9" y="-2.1" width="3.8" height="4.3" transform="translate(88.6 74.2) rotate(-17)"/>
<rect x="-2.2" y="-1.6" width="4.5" height="3.1" transform="translate(92.7 90.3) rotate(-11)"/>
<rect x="-2.5" y="-1.7" width="5.0" height="3.4" transform="translate(95.3 100.1) rotate(-12)"/>
<rect x="-2.3" y="-1.5" width="4.5" height="3.0" transform="translate(101.8 116.3) rotate(-17)"/>
<rect x="-2.0" y="-1.7" width="4.0" height="3.5" transform="translate(103.3 120.8) rotate(73)"/>
<rect x="-2.4" y="-1.7" width="4.8" height="3.5" transform="translate(104.8 126.1) rotate(-17)"/>
<rect x="-2.9" y="-1.9" width="5.8" height="3.8" transform="translate(107.0 136.1) rotate(-17)"/>
<rect x="-1.9" y="-1.4" width="3.8" height="2.8" transform="translate(109.5 140.9) rotate(-10)"/>
<rect x="-2.5" y="-1.5" width="5.1" height="3.0" transform="translate(111.5 152.0) rotate(73)"/>
<rect x="-2.6" y="-1.5" width="5.3" height="3.0" transform="translate(112.9 157.8) rotate(-17)"/>
<rect x="-1.7" y="-1.6" width="3.5" height="3.3" transform="translate(116.1 161.5) rotate(-24)"/>
<rect x="-1.8" y="-2.0" width="3.7" height="4.0" transform="translate(119.8 173.0) rotate(73)"/>
<rect x="-2.3" y="-2.1" width="4.5" height="4.1" transform="translate(119.0 177.7) rotate(-17)"/>
<rect x="-2.4" y="-1.8" width="4.8" height="3.7" transform="translate(122.8 183.1) rotate(73)"/>
<rect x="-2.5" y="-1.7" width="4.9" height="3.4" transform="translate(123.7 187.3) rotate(73)"/>
<rect x="-2.8" y="-1.6" width="5.6" height="3.2" transform="translate(125.9 198.1) rotate(-17)"/>
<rect x="-2.1" y="-1.6" width="4.3" height="3.3" transform="translate(127.3 203.1) rotate(-14)"/>
<rect x="-2.4" y="-1.8" width="4.9" height="3.6" transform="translate(129.9 209.4) rotate(-17)"/>
<rect x="-2.4" y="-1.6" width="4.9" height="3.2" transform="translate(130.6 214.9) rotate(-17)"/>
<rect x="-2.0" y="-1.8" width="4.0" height="3.6" transform="translate(133.8 219.6) rotate(73)"/>
<rect x="-2.4" y="-2.1" width="4.7" height="4.3" transform="translate(134.4 224.1) rotate(-17)"/>
<rect x="-1.9" y="-2.1" width="3.7" height="4.2" transform="translate(136.6 228.6) rotate(-18)"/>
<rect x="-2.2" y="-1.5" width="4.5" height="3.1" transform="translate(136.8 234.9) rotate(-23)"/>
<rect x="-2.1" y="-1.4" width="4.3" height="2.9" transform="translate(138.8 239.9) rotate(73)"/>
<rect x="-2.0" y="-1.7" width="3.9" height="3.3" transform="translate(141.9 244.8) rotate(-17)"/>
<rect x="-2.4" y="-2.0" width="4.8" height="3.9" transform="translate(144.4 255.3) rotate(-17)"/>
<rect x="-2.5" y="-1.7" width="5.0" height="3.4" transform="translate(146.5 259.9) rotate(73)"/>
<rect x="-2.5" y="-1.7" width="5.0" height="3.4" transform="translate(148.1 265.8) rotate(-17)"/>
<rect x="-1.7" y="-2.1" width="3.4" height="4.2" transform="translate(148.3 270.3) rotate(-17)"/>
<rect x="-2.8" y="-1.4" width="5.7" height="2.9" transform="translate(74.9 10.2) rotate(-17)"/>
<rect x="-1.9" y="-1.6" width="3.8" height="3.2" transform="translate(78.3 21.5) rotate(-17)"/>
<rect x="-2.5" y="-1.9" width="4.9" height="3.9" transform="translate(82.8 31.7) rotate(-20)"/>
<rect x="-2.7" y="-1.9" width="5.4" height="3.7" transform="translate(84.7 42.2) rotate(73)"/>
<rect x="-2.9" y="-1.9" width="5.8" height="3.8" transform="translate(87.6 47.1) rotate(-17)"/>
<rect x="-3.0" y="-1.5" width="6.0" height="3.0" transform="translate(89.7 57.9) rotate(-25)"/>
<rect x="-2.0" y="-2.1" width="4.0" height="4.2" transform="translate(92.1 62.7) rotate(-17)"/>
<rect x="-2.1" y="-1.9" width="4.2" height="3.8" transform="translate(92.4 68.4) rotate(-17)"/>
<rect x="-2.3" y="-1.8" width="4.6" height="3.6" transform="translate(93.9 72.9) rotate(73)"/>
<rect x="-2.2" y="-2.2" width="4.4" height="4.3" transform="translate(100.2 87.6) rotate(-18)"/>
<rect x="-2.1" y="-1.7" width="4.1" height="3.5" transform="translate(99.9 93.0) rotate(-17)"/>
<rect x="-2.1" y="-1.9" width="4.2" height="3.8" transform="translate(105.3 109.1) rotate(-12)"/>
<rect x="-2.9" y="-1.9" width="5.8" height="3.9" transform="translate(107.2 114.2) rotate(-17)"/>
<rect x="-2.8" y="-1.7" width="5.6" height="3.3" transform="translate(108.6 118.8) rotate(-17)"/>
<rect x="-2.6" y="-1.6" width="5.3" height="3.1" transform="translate(113.9 134.1) rotate(-13)"/>
<rect x="-1.9" y="-2.2" width="3.9" height="4.3" transform="translate(115.2 140.5) rotate(-17)"/>
<rect x="-2.6" y="-2.1" width="5.2" height="4.3" transform="translate(117.1 145.1) rotate(-17)"/>
<rect x="-2.3" y="-2.1" width="4.6" height="4.1" transform="translate(117.8 150.4) rotate(-17)"/>
<rect x="-2.3" y="-1.4" width="4.5" height="2.9" transform="translate(120.4 154.6) rotate(-17)"/>
<rect x="-2.9" y="-2.0" width="5.7" height="4.0" transform="translate(121.6 160.7) rotate(73)"/>
<rect x="-2.6" y="-1.9" width="5.2" height="3.8" transform="translate(124.3 171.3) rotate(-17)"/>
<rect x="-2.4" y="-1.7" width="4.8" height="3.4" transform="translate(125.3 175.8) rotate(-17)"/>
<rect x="-2.7" y="-2.0" width="5.5" height="4.0" transform="translate(128.7 180.9) rotate(-17)"/>
<rect x="-2.2" y="-1.7" width="4.4" height="3.5" transform="translate(129.6 187.1) rotate(-17)"/>
<rect x="-2.1" y="-1.6" width="4.2" height="3.1" transform="translate(133.5 201.4) rotate(73)"/>
<rect x="-2.2" y="-1.8" width="4.3" height="3.7" transform="translate(135.6 207.6) rotate(-17)"/>
<rect x="-2.7" y="-2.0" width="5.5" height="3.9" transform="translate(137.7 211.2) rotate(-17)"/>
<rect x="-2.4" y="-2.1" width="4.9" height="4.2" transform="translate(138.4 218.0) rotate(-17)"/>
<rect x="-2.6" y="-2.2" width="5.3" height="4.3" transform="translate(139.9 222.7) rotate(73)"/>
<rect x="-2.7" y="-2.2" width="5.4" height="4.3" transform="translate(142.6 228.1) rotate(-17)"/>
<rect x="-1.8" y="-2.0" width="3.6" height="4.0" transform="translate(144.5 238.2) rotate(-17)"/>
<rect x="-2.1" y="-2.1" width="4.2" height="4.3" transform="translate(146.3 244.1) rotate(73)"/>
<rect x="-2.8" y="-1.9" width="5.6" height="3.8" transform="translate(147.7 248.5) rotate(73)"/>
<rect x="-2.1" y="-1.5" width="4.2" height="3.1" transform="translate(148.7 253.3) rotate(73)"/>
<rect x="-1.7" y="-1.8" width="3.4" height="3.5" transform="translate(151.6 259.1) rotate(-17)"/>
<rect x="-2.9" y="-1.9" width="5.7" height="3.8" transform="translate(152.5 263.5) rotate(-17)"/>
<rect x="-2.8" y="-1.7" width="5.7" height="3.4" transform="translate(87.5 24.7) rotate(73)"/>
<rect x="-2.5" y="-2.1" width="5.0" height="4.1" transform="translate(88.3 29.7) rotate(-17)"/>
<rect x="-2.8" y="-1.4" width="5.5" height="2.8" transform="translate(90.5 34.7) rotate(-17)"/>
<rect x="-1.8" y="-2.1" width="3.6" height="4.1" transform="translate(91.8 39.3) rotate(73)"/>
<rect x="-2.1" y="-1.9" width="4.2" height="3.9" transform="translate(96.8 55.5) rotate(73)"/>
<rect x="-1.8" y="-1.8" width="3.6" height="3.7" transform="translate(98.0 61.0) rotate(-21)"/>
<rect x="-2.5" y="-1.8" width="5.1" height="3.6" transform="translate(101.7 70.6) rotate(-17)"/>
<rect x="-2.3" y="-1.9" width="4.6" height="3.8" transform="translate(105.6 85.6) rotate(-19)"/>
<rect x="-1.8" y="-1.7" width="3.7" height="3.3" transform="translate(107.7 90.9) rotate(-17)"/>
<rect x="-2.4" y="-1.6" width="4.8" height="3.3" transform="translate(111.2 102.1) rotate(-17)"/>
<rect x="-2.0" y="-2.0" width="4.0" height="4.0" transform="translate(113.1 107.3) rotate(-17)"/>
<rect x="-2.1" y="-2.1" width="4.2" height="4.2" transform="translate(114.4 112.5) rotate(-17)"/>
<rect x="-2.7" y="-2.0" width="5.3" height="3.9" transform="translate(115.4 117.0) rotate(73)"/>
<rect x="-2.1" y="-1.7" width="4.3" height="3.4" transform="translate(117.0 122.2) rotate(73)"/>
<rect x="-2.7" y="-1.4" width="5.4" height="2.8" transform="translate(123.8 142.6) rotate(-10)"/>
<rect x="-2.7" y="-1.5" width="5.4" height="3.0" transform="translate(124.8 147.6) rotate(-22)"/>
<rect x="-2.5" y="-1.6" width="4.9" height="3.1" transform="translate(127.0 152.9) rotate(-17)"/>
<rect x="-2.4" y="-1.5" width="4.8" height="3.0" transform="translate(128.6 158.1) rotate(-17)"/>
<rect x="-2.3" y="-1.7" width="4.7" height="3.3" transform="translate(131.5 175.0) rotate(-17)"/>
<rect x="-2.1" y="-1.9" width="4.2" height="3.9" transform="translate(133.0 179.9) rotate(-17)"/>
<rect x="-2.9" y="-1.9" width="5.8" height="3.8" transform="translate(134.6 183.9) rotate(73)"/>
<rect x="-2.1" y="-1.8" width="4.3" height="3.6" transform="translate(140.4 199.1) rotate(-17)"/>
<rect x="-2.0" y="-1.8" width="4.0" height="3.6" transform="translate(144.8 216.0) rotate(-17)"/>
<rect x="-2.3" y="-1.4" width="4.6" height="2.9" transform="translate(146.9 225.9) rotate(-17)"/>
<rect x="-2.0" y="-1.8" width="4.0" height="3.6" transform="translate(150.5 229.9) rotate(-17)"/>
<rect x="-2.3" y="-1.8" width="4.5" height="3.7" transform="translate(153.6 240.9) rotate(-17)"/>
<rect x="-2.7" y="-1.5" width="5.4" height="3.1" transform="translate(155.0 251.6) rotate(-16)"/>
<rect x="-2.8" y="-1.5" width="5.5" height="3.1" transform="translate(156.4 256.4) rotate(-17)"/>
<rect x="-1.8" y="-1.8" width="3.5" height="3.6" transform="translate(159.2 261.9) rotate(-17)"/>
<rect x="-2.0" y="-1.7" width="4.0" height="3.4" transform="translate(99.1 43.8) rotate(-18)"/>
<rect x="-1.8" y="-2.1" width="3.6" height="4.1" transform="translate(101.7 53.7) rotate(-17)"/>
<rect x="-2.1" y="-1.8" width="4.2" height="3.7" transform="translate(103.7 58.4) rotate(-17)"/>
<rect x="-2.9" y="-1.8" width="5.7" height="3.6" transform="translate(107.0 69.7) rotate(-17)"/>
<rect x="-2.4" y="-1.8" width="4.8" height="3.7" transform="translate(111.1 83.9) rotate(-17)"/>
<rect x="-2.5" y="-1.4" width="5.0" height="2.8" transform="translate(120.1 110.5) rotate(-17)"/>
<rect x="-2.2" y="-1.4" width="4.5" height="2.8" transform="translate(120.6 116.0) rotate(-17)"/>
<rect x="-1.9" y="-2.1" width="3.9" height="4.2" transform="translate(125.2 131.8) rotate(-17)"/>
<rect x="-1.8" y="-1.4" width="3.5" height="2.9" transform="translate(127.4 136.1) rotate(73)"/>
<rect x="-1.7" y="-2.2" width="3.5" height="4.4" transform="translate(131.3 145.6) rotate(-14)"/>
<rect x="-2.6" y="-1.8" width="5.3" height="3.5" transform="translate(132.7 151.9) rotate(-17)"/>
<rect x="-2.9" y="-1.9" width="5.8" height="3.9" transform="translate(135.0 162.1) rotate(-17)"/>
<rect x="-1.7" y="-1.6" width="3.5" height="3.2" transform="translate(138.8 172.4) rotate(-17)"/>
<rect x="-2.5" y="-1.7" width="5.1" height="3.4" transform="translate(138.6 177.3) rotate(73)"/>
<rect x="-2.5" y="-1.6" width="5.0" height="3.2" transform="translate(142.2 182.3) rotate(-17)"/>
<rect x="-2.6" y="-2.2" width="5.2" height="4.4" transform="translate(145.0 198.0) rotate(73)"/>
<rect x="-2.6" y="-1.9" width="5.3" height="3.7" transform="translate(148.1 204.0) rotate(73)"/>
<rect x="-2.8" y="-1.8" width="5.7" height="3.5" transform="translate(150.2 208.6) rotate(-17)"/>
<rect x="-2.3" y="-2.0" width="4.5" height="4.0" transform="translate(150.8 213.2) rotate(-17)"/>
<rect x="-2.3" y="-1.8" width="4.7" height="3.6" transform="translate(152.8 218.5) rotate(-17)"/>
<rect x="-1.8" y="-1.9" width="3.5" height="3.9" transform="translate(154.0 224.1) rotate(-17)"/>
<rect x="-2.6" y="-1.4" width="5.1" height="2.8" transform="translate(156.3 229.7) rotate(-23)"/>
<rect x="-2.6" y="-2.2" width="5.2" height="4.3" transform="translate(158.1 234.8) rotate(73)"/>
<rect x="-2.9" y="-1.9" width="5.7" height="3.9" transform="translate(160.0 245.3) rotate(-17)"/>
<rect x="-2.2" y="-1.8" width="4.4" height="3.6" transform="translate(170.5 275.7) rotate(-17)"/>
<rect x="-3.0" y="-1.6" width="5.9" height="3.2" transform="translate(145.0 170.0) rotate(-17)"/>
<rect x="-2.8" y="-2.0" width="5.6" height="4.0" transform="translate(145.5 175.3) rotate(-17)"/>
<rect x="-2.7" y="-1.6" width="5.3" height="3.1" transform="translate(147.3 180.7) rotate(-11)"/>
<rect x="-1.9" y="-2.0" width="3.9" height="3.9" transform="translate(148.9 186.8) rotate(73)"/>
<rect x="-2.3" y="-2.1" width="4.7" height="4.2" transform="translate(154.6 200.9) rotate(-17)"/>
<rect x="-1.9" y="-2.1" width="3.9" height="4.2" transform="translate(155.8 206.3) rotate(-17)"/>
<rect x="-2.3" y="-2.2" width="4.6" height="4.4" transform="translate(157.9 211.2) rotate(-17)"/>
<rect x="-2.0" y="-1.7" width="4.0" height="3.4" transform="translate(158.9 216.7) rotate(-17)"/>
<rect x="-2.5" y="-2.1" width="5.1" height="4.2" transform="translate(160.5 222.3) rotate(-17)"/>
<rect x="-2.2" y="-2.0" width="4.5" height="4.0" transform="translate(160.7 226.8) rotate(73)"/>
<rect x="-2.6" y="-2.1" width="5.3" height="4.3" transform="translate(176.7 274.2) rotate(-17)"/>
<rect x="-2.8" y="-1.5" width="5.6" height="2.9" transform="translate(98.9 3.9) rotate(-17)"/>
<rect x="-2.7" y="-1.9" width="5.4" height="3.9" transform="translate(102.0 13.6) rotate(73)"/>
<rect x="-2.9" y="-1.8" width="5.8" height="3.7" transform="translate(103.6 18.9) rotate(-11)"/>
<rect x="-2.8" y="-1.5" width="5.6" height="3.1" transform="translate(106.0 23.5) rotate(-15)"/>
<rect x="-2.9" y="-1.9" width="5.7" height="3.7" transform="translate(108.3 28.4) rotate(-17)"/>
<rect x="-2.6" y="-2.0" width="5.2" height="4.0" transform="translate(108.9 34.8) rotate(73)"/>
<rect x="-2.6" y="-2.0" width="5.2" height="4.0" transform="translate(114.7 49.0) rotate(-17)"/>
<rect x="-2.9" y="-1.8" width="5.9" height="3.6" transform="translate(115.0 54.5) rotate(-17)"/>
<rect x="-2.7" y="-1.6" width="5.5" height="3.2" transform="translate(118.2 59.6) rotate(-17)"/>
<rect x="-2.9" y="-1.5" width="5.7" height="3.0" transform="translate(119.2 65.1) rotate(-11)"/>
<rect x="-2.1" y="-2.0" width="4.2" height="4.0" transform="translate(121.0 69.8) rotate(-17)"/>
<rect x="-2.6" y="-1.9" width="5.3" height="3.9" transform="translate(125.8 86.2) rotate(-17)"/>
<rect x="-2.0" y="-1.9" width="4.1" height="3.8" transform="translate(128.7 96.4) rotate(73)"/>
<rect x="-2.5" y="-2.1" width="5.0" height="4.2" transform="translate(142.7 142.2) rotate(-17)"/>
<rect x="-3.0" y="-1.6" width="6.0" height="3.2" transform="translate(144.4 147.3) rotate(73)"/>
<rect x="-2.5" y="-1.7" width="5.0" height="3.4" transform="translate(144.9 153.6) rotate(-10)"/>
<rect x="-2.0" y="-1.4" width="4.1" height="2.8" transform="translate(152.1 173.8) rotate(-17)"/>
<rect x="-2.8" y="-1.6" width="5.7" height="3.1" transform="translate(153.4 179.5) rotate(-17)"/>
<rect x="-1.8" y="-2.0" width="3.5" height="4.1" transform="translate(155.3 184.6) rotate(-17)"/>
<rect x="-2.7" y="-1.8" width="5.3" height="3.6" transform="translate(156.4 189.3) rotate(-17)"/>
<rect x="-2.1" y="-1.4" width="4.1" height="2.9" transform="translate(170.0 231.0) rotate(73)"/>
<rect x="-1.9" y="-1.8" width="3.8" height="3.5" transform="translate(169.8 235.3) rotate(-22)"/>
<rect x="-2.9" y="-1.8" width="5.7" height="3.6" transform="translate(174.0 246.6) rotate(-17)"/>
<rect x="-2.5" y="-1.5" width="4.9" height="3.0" transform="translate(176.6 251.5) rotate(-17)"/>
<rect x="-1.7" y="-1.9" width="3.5" height="3.8" transform="translate(178.0 262.2) rotate(-17)"/>
<rect x="-2.5" y="-1.8" width="5.1" height="3.7" transform="translate(180.1 267.0) rotate(-17)"/>
<rect x="-2.9" y="-2.1" width="5.8" height="4.3" transform="translate(182.1 272.1) rotate(-10)"/>
<rect x="-2.8" y="-1.5" width="5.6" height="2.9" transform="translate(184.1 276.2) rotate(-17)"/>
<rect x="-1.9" y="-1.7" width="3.9" height="3.5" transform="translate(105.2 2.3) rotate(73)"/>
<rect x="-2.8" y="-1.7" width="5.6" height="3.5" transform="translate(109.8 11.2) rotate(-16)"/>
<rect x="-2.1" y="-2.2" width="4.1" height="4.3" transform="translate(109.9 17.2) rotate(-17)"/>
<rect x="-2.2" y="-1.6" width="4.5" height="3.2" transform="translate(112.8 26.9) rotate(-11)"/>
<rect x="-2.2" y="-1.7" width="4.4" height="3.4" transform="translate(114.9 32.2) rotate(-17)"/>
<rect x="-2.4" y="-1.7" width="4.9" height="3.3" transform="translate(116.4 38.5) rotate(73)"/>
<rect x="-2.7" y="-2.1" width="5.4" height="4.2" transform="translate(121.3 48.3) rotate(-17)"/>
<rect x="-2.6" y="-1.8" width="5.2" height="3.5" transform="translate(121.3 53.9) rotate(-17)"/>
<rect x="-1.9" y="-1.9" width="3.7" height="3.8" transform="translate(129.7 78.7) rotate(-17)"/>
<rect x="-2.1" y="-1.8" width="4.1" height="3.7" transform="translate(130.2 83.7) rotate(-24)"/>
<rect x="-2.3" y="-2.0" width="4.7" height="4.0" transform="translate(133.9 94.1) rotate(-17)"/>
<rect x="-1.8" y="-1.6" width="3.5" height="3.3" transform="translate(135.7 99.4) rotate(-16)"/>
<rect x="-2.7" y="-2.0" width="5.5" height="4.0" transform="translate(138.1 105.3) rotate(-17)"/>
<rect x="-2.9" y="-1.7" width="5.8" height="3.3" transform="translate(142.3 120.4) rotate(-11)"/>
<rect x="-2.6" y="-1.5" width="5.1" height="2.9" transform="translate(147.5 135.0) rotate(-22)"/>
<rect x="-2.2" y="-2.2" width="4.3" height="4.4" transform="translate(148.6 140.7) rotate(-19)"/>
<rect x="-1.7" y="-2.0" width="3.5" height="4.0" transform="translate(149.0 146.2) rotate(-17)"/>
<rect x="-2.0" y="-1.4" width="4.0" height="2.9" transform="translate(152.4 151.9) rotate(-25)"/>
<rect x="-2.7" y="-1.4" width="5.4" height="2.9" transform="translate(154.2 156.2) rotate(-17)"/>
<rect x="-2.6" y="-2.0" width="5.1" height="4.1" transform="translate(154.3 161.2) rotate(-14)"/>
<rect x="-1.8" y="-1.8" width="3.6" height="3.6" transform="translate(158.7 172.1) rotate(-17)"/>
<rect x="-2.4" y="-1.5" width="4.8" height="3.0" transform="translate(158.9 177.7) rotate(-17)"/>
<rect x="-1.8" y="-1.7" width="3.5" height="3.3" transform="translate(170.5 213.4) rotate(73)"/>
<rect x="-2.5" y="-1.9" width="5.0" height="3.9" transform="translate(175.9 229.4) rotate(73)"/>
<rect x="-2.4" y="-1.8" width="4.7" height="3.6" transform="translate(177.1 234.3) rotate(73)"/>
<rect x="-2.1" y="-2.1" width="4.1" height="4.2" transform="translate(179.7 239.2) rotate(-17)"/>
<rect x="-2.3" y="-1.7" width="4.6" height="3.5" transform="translate(179.3 244.0) rotate(73)"/>
<rect x="-2.6" y="-2.0" width="5.2" height="4.0" transform="translate(186.9 269.6) rotate(-17)"/>
<rect x="-2.4" y="-1.4" width="4.8" height="2.8" transform="translate(188.9 276.1) rotate(73)"/>
<rect x="-2.5" y="-1.4" width="5.0" height="2.8" transform="translate(114.1 9.7) rotate(-15)"/>
<rect x="-2.6" y="-2.1" width="5.2" height="4.2" transform="translate(116.3 15.7) rotate(73)"/>
<rect x="-2.4" y="-1.9" width="4.9" height="3.8" transform="translate(117.8 21.1) rotate(-17)"/>
<rect x="-2.9" y="-2.1" width="5.8" height="4.2" transform="translate(119.9 25.0) rotate(-17)"/>
<rect x="-2.3" y="-1.8" width="4.6" height="3.5" transform="translate(122.6 30.8) rotate(-17)"/>
<rect x="-2.0" y="-2.2" width="4.0" height="4.3" transform="translate(121.7 35.7) rotate(-17)"/>
<rect x="-2.8" y="-1.9" width="5.6" height="3.8" transform="translate(126.9 45.2) rotate(-17)"/>
<rect x="-2.3" y="-1.4" width="4.7" height="2.8" transform="translate(127.5 51.8) rotate(-18)"/>
<rect x="-2.9" y="-2.1" width="5.9" height="4.2" transform="translate(131.2 61.2) rotate(73)"/>
<rect x="-2.5" y="-1.4" width="5.0" height="2.8" transform="translate(133.1 66.2) rotate(-24)"/>
<rect x="-1.9" y="-1.6" width="3.9" height="3.2" transform="translate(136.1 82.2) rotate(-23)"/>
<rect x="-2.7" y="-1.4" width="5.5" height="2.8" transform="translate(141.0 92.5) rotate(-17)"/>
<rect x="-2.5" y="-1.9" width="4.9" height="3.7" transform="translate(144.4 102.7) rotate(-17)"/>
<rect x="-2.1" y="-1.7" width="4.2" height="3.3" transform="translate(147.7 113.1) rotate(-15)"/>
<rect x="-1.8" y="-2.0" width="3.6" height="4.0" transform="translate(153.5 133.4) rotate(-17)"/>
<rect x="-2.7" y="-1.5" width="5.4" height="3.0" transform="translate(155.5 139.4) rotate(-12)"/>
<rect x="-2.6" y="-2.0" width="5.2" height="3.9" transform="translate(155.1 144.1) rotate(-17)"/>
<rect x="-2.8" y="-1.9" width="5.6" height="3.8" transform="translate(157.9 149.8) rotate(-17)"/>
<rect x="-2.7" y="-1.8" width="5.4" height="3.7" transform="translate(173.1 201.1) rotate(73)"/>
<rect x="-1.8" y="-2.0" width="3.6" height="3.9" transform="translate(175.1 207.0) rotate(-17)"/>
<rect x="-2.1" y="-1.5" width="4.2" height="3.0" transform="translate(179.2 216.6) rotate(-17)"/>
<rect x="-2.5" y="-1.7" width="4.9" height="3.4" transform="translate(183.3 231.3) rotate(-17)"/>
<rect x="-2.6" y="-1.8" width="5.1" height="3.6" transform="translate(185.0 237.0) rotate(-14)"/>
<rect x="-2.6" y="-1.5" width="5.3" height="2.9" transform="translate(186.1 241.9) rotate(-17)"/>
<rect x="-2.1" y="-1.8" width="4.3" height="3.6" transform="translate(190.1 253.1) rotate(73)"/>
<rect x="-2.7" y="-2.1" width="5.4" height="4.1" transform="translate(191.0 257.4) rotate(73)"/>
<rect x="-1.9" y="-2.1" width="3.8" height="4.2" transform="translate(191.3 262.7) rotate(-17)"/>
<rect x="-2.3" y="-2.0" width="4.6" height="4.0" transform="translate(193.6 268.2) rotate(-17)"/>
<rect x="-1.9" y="-1.9" width="3.9" height="3.8" transform="translate(196.3 272.6) rotate(73)"/>
<rect x="-2.1" y="-1.9" width="4.2" height="3.9" transform="translate(120.8 8.1) rotate(-17)"/>
<rect x="-2.6" y="-1.5" width="5.2" height="3.1" transform="translate(122.3 13.5) rotate(-17)"/>
<rect x="-2.3" y="-1.7" width="4.6" height="3.3" transform="translate(126.8 22.8) rotate(-17)"/>
<rect x="-2.9" y="-1.4" width="5.8" height="2.9" transform="translate(127.9 28.3) rotate(73)"/>
<rect x="-2.6" y="-1.9" width="5.1" height="3.9" transform="translate(133.5 49.2) rotate(-17)"/>
<rect x="-2.4" y="-1.9" width="4.8" height="3.8" transform="translate(138.4 64.2) rotate(-17)"/>
<rect x="-2.3" y="-2.1" width="4.6" height="4.3" transform="translate(146.1 91.6) rotate(-17)"/>
<rect x="-2.2" y="-2.0" width="4.4" height="4.0" transform="translate(148.6 96.5) rotate(-17)"/>
<rect x="-2.6" y="-2.0" width="5.3" height="4.0" transform="translate(149.9 100.7) rotate(-17)"/>
<rect x="-2.8" y="-1.6" width="5.6" height="3.3" transform="translate(159.5 132.2) rotate(-17)"/>
<rect x="-2.1" y="-1.7" width="4.2" height="3.4" transform="translate(162.4 142.5) rotate(-17)"/>
<rect x="-1.8" y="-1.6" width="3.6" height="3.3" transform="translate(165.2 152.6) rotate(-24)"/>
<rect x="-2.8" y="-2.0" width="5.6" height="4.0" transform="translate(169.4 169.0) rotate(73)"/>
<rect x="-2.2" y="-2.0" width="4.4" height="3.9" transform="translate(173.6 178.8) rotate(-16)"/>
<rect x="-2.4" y="-1.7" width="4.8" height="3.5" transform="translate(174.6 183.1) rotate(-17)"/>
<rect x="-1.8" y="-2.0" width="3.5" height="3.9" transform="translate(175.9 189.2) rotate(-17)"/>
<rect x="-2.7" y="-1.6" width="5.5" height="3.3" transform="translate(179.8 199.2) rotate(-17)"/>
<rect x="-2.4" y="-2.0" width="4.8" height="4.0" transform="translate(180.5 204.3) rotate(73)"/>
<rect x="-2.2" y="-1.5" width="4.5" height="3.0" transform="translate(190.6 236.1) rotate(-17)"/>
<rect x="-2.7" y="-1.4" width="5.4" height="2.8" transform="translate(192.4 240.7) rotate(-24)"/>
<rect x="-2.4" y="-1.9" width="4.8" height="3.7" transform="translate(195.9 251.5) rotate(-17)"/>
<rect x="-2.1" y="-1.7" width="4.1" height="3.5" transform="translate(196.8 255.8) rotate(-22)"/>
<rect x="-2.9" y="-1.9" width="5.9" height="3.7" transform="translate(200.4 266.8) rotate(-23)"/>
<rect x="-2.1" y="-2.0" width="4.2" height="4.0" transform="translate(202.0 276.8) rotate(-17)"/>
<rect x="-2.5" y="-2.0" width="4.9" height="4.0" transform="translate(127.6 5.7) rotate(73)"/>
<rect x="-1.8" y="-1.8" width="3.7" height="3.6" transform="translate(131.8 21.0) rotate(-21)"/>
<rect x="-2.5" y="-1.8" width="5.0" height="3.7" transform="translate(134.0 27.1) rotate(-17)"/>
<rect x="-1.8" y="-1.9" width="3.5" height="3.7" transform="translate(139.0 42.1) rotate(-17)"/>
<rect x="-2.9" y="-1.8" width="5.8" height="3.5" transform="translate(139.2 47.4) rotate(-17)"/>
<rect x="-2.6" y="-1.6" width="5.2" height="3.2" transform="translate(140.8 52.9) rotate(-17)"/>
<rect x="-1.9" y="-1.8" width="3.7" height="3.6" transform="translate(143.4 58.6) rotate(-17)"/>
<rect x="-1.7" y="-1.5" width="3.4" height="3.0" transform="translate(144.2 62.5) rotate(-17)"/>
<rect x="-2.6" y="-1.5" width="5.2" height="3.0" transform="translate(146.9 67.7) rotate(-17)"/>
<rect x="-2.0" y="-2.0" width="4.0" height="3.9" transform="translate(146.8 74.5) rotate(-17)"/>
<rect x="-2.7" y="-1.8" width="5.5" height="3.5" transform="translate(149.6 78.1) rotate(-17)"/>
<rect x="-2.8" y="-1.8" width="5.7" height="3.7" transform="translate(151.5 82.8) rotate(-17)"/>
<rect x="-2.2" y="-1.5" width="4.3" height="3.1" transform="translate(151.7 89.5) rotate(-17)"/>
<rect x="-1.7" y="-2.1" width="3.4" height="4.1" transform="translate(154.9 94.4) rotate(-17)"/>
<rect x="-2.9" y="-2.2" width="5.8" height="4.3" transform="translate(158.1 104.2) rotate(-17)"/>
<rect x="-2.5" y="-2.1" width="5.1" height="4.2" transform="translate(163.5 125.0) rotate(-17)"/>
<rect x="-2.1" y="-2.1" width="4.2" height="4.2" transform="translate(165.8 130.0) rotate(-11)"/>
<rect x="-2.6" y="-1.9" width="5.2" height="3.7" transform="translate(167.4 134.7) rotate(-17)"/>
<rect x="-2.1" y="-1.6" width="4.2" height="3.2" transform="translate(168.4 141.0) rotate(-21)"/>
<rect x="-1.8" y="-1.7" width="3.6" height="3.5" transform="translate(168.5 145.8) rotate(-17)"/>
<rect x="-2.2" y="-1.4" width="4.5" height="2.8" transform="translate(171.9 151.2) rotate(-17)"/>
<rect x="-3.0" y="-2.0" width="6.0" height="3.9" transform="translate(172.8 156.3) rotate(73)"/>
<rect x="-2.6" y="-1.8" width="5.2" height="3.6" transform="translate(178.2 171.6) rotate(-17)"/>
<rect x="-3.0" y="-2.1" width="6.0" height="4.2" transform="translate(181.0 181.3) rotate(-17)"/>
<rect x="-2.5" y="-1.8" width="5.1" height="3.7" transform="translate(181.7 186.6) rotate(-10)"/>
<rect x="-2.5" y="-1.6" width="4.9" height="3.1" transform="translate(188.3 208.5) rotate(-17)"/>
<rect x="-2.0" y="-1.8" width="4.0" height="3.7" transform="translate(190.3 212.6) rotate(-19)"/>
<rect x="-1.8" y="-2.1" width="3.5" height="4.1" transform="translate(192.8 218.6) rotate(-17)"/>
<rect x="-1.7" y="-1.7" width="3.5" height="3.3" transform="translate(195.9 227.4) rotate(-18)"/>
<rect x="-1.8" y="-2.1" width="3.7" height="4.3" transform="translate(197.5 233.9) rotate(-16)"/>
<rect x="-2.3" y="-1.6" width="4.6" height="3.3" transform="translate(198.9 237.7) rotate(-9)"/>
<rect x="-2.9" y="-1.8" width="5.7" height="3.6" transform="translate(200.5 249.7) rotate(-17)"/>
<rect x="-2.9" y="-1.8" width="5.7" height="3.5" transform="translate(203.9 254.0) rotate(-17)"/>
<rect x="-2.1" y="-2.2" width="4.2" height="4.3" transform="translate(133.4 4.8) rotate(73)"/>
<rect x="-2.3" y="-1.7" width="4.6" height="3.5" transform="translate(133.7 10.3) rotate(73)"/>
<rect x="-2.7" y="-1.8" width="5.4" height="3.6" transform="translate(136.0 14.5) rotate(-17)"/>
<rect x="-1.8" y="-1.8" width="3.6" height="3.6" transform="translate(140.1 24.3) rotate(-17)"/>
<rect x="-1.7" y="-2.0" width="3.4" height="3.9" transform="translate(147.0 50.6) rotate(-17)"/>
<rect x="-2.3" y="-1.9" width="4.6" height="3.8" transform="translate(150.9 60.8) rotate(-17)"/>
<rect x="-2.9" y="-1.7" width="5.9" height="3.4" transform="translate(152.9 66.9) rotate(-17)"/>
<rect x="-2.8" y="-1.8" width="5.5" height="3.7" transform="translate(153.0 71.4) rotate(-17)"/>
<rect x="-2.3" y="-1.6" width="4.6" height="3.3" transform="translate(155.0 76.5) rotate(73)"/>
<rect x="-2.9" y="-1.5" width="5.7" height="3.0" transform="translate(159.1 92.5) rotate(73)"/>
<rect x="-2.2" y="-1.7" width="4.3" height="3.3" transform="translate(160.6 98.0) rotate(-17)"/>
<rect x="-2.1" y="-1.7" width="4.2" height="3.3" transform="translate(161.9 102.6) rotate(73)"/>
<rect x="-3.0" y="-1.6" width="6.0" height="3.2" transform="translate(170.0 122.6) rotate(-17)"/>
<rect x="-2.6" y="-2.0" width="5.3" height="4.0" transform="translate(171.1 128.9) rotate(-17)"/>
<rect x="-1.9" y="-1.6" width="3.9" height="3.3" transform="translate(172.5 133.0) rotate(73)"/>
<rect x="-1.9" y="-2.0" width="3.8" height="4.0" transform="translate(176.2 148.6) rotate(-17)"/>
<rect x="-2.2" y="-1.7" width="4.5" height="3.4" transform="translate(179.4 154.1) rotate(-17)"/>
<rect x="-2.4" y="-2.0" width="4.9" height="3.9" transform="translate(180.5 158.6) rotate(-17)"/>
<rect x="-2.3" y="-2.0" width="4.6" height="4.1" transform="translate(183.5 170.1) rotate(-17)"/>
<rect x="-1.9" y="-1.7" width="3.8" height="3.4" transform="translate(185.6 175.6) rotate(-17)"/>
<rect x="-2.1" y="-1.5" width="4.2" height="3.0" transform="translate(187.5 179.7) rotate(-17)"/>
<rect x="-2.0" y="-2.1" width="4.0" height="4.2" transform="translate(189.2 185.1) rotate(-17)"/>
<rect x="-2.7" y="-1.5" width="5.5" height="2.9" transform="translate(189.8 189.7) rotate(-20)"/>
<rect x="-1.8" y="-1.5" width="3.7" height="3.0" transform="translate(193.9 206.1) rotate(-21)"/>
<rect x="-2.0" y="-1.6" width="4.1" height="3.3" transform="translate(195.3 211.8) rotate(73)"/>
<rect x="-1.9" y="-2.1" width="3.8" height="4.3" transform="translate(197.7 216.0) rotate(73)"/>
<rect x="-1.8" y="-1.5" width="3.6" height="3.0" transform="translate(201.4 226.6) rotate(73)"/>
<rect x="-2.4" y="-1.4" width="4.7" height="2.9" transform="translate(203.2 231.7) rotate(-17)"/>
<rect x="-2.6" y="-1.7" width="5.2" height="3.5" transform="translate(139.7 2.3) rotate(-17)"/>
<rect x="-2.4" y="-1.9" width="4.8" height="3.8" transform="translate(140.7 7.9) rotate(-17)"/>
<rect x="-2.7" y="-1.5" width="5.4" height="3.0" transform="translate(142.6 13.5) rotate(73)"/>
<rect x="-2.3" y="-2.0" width="4.6" height="4.1" transform="translate(143.6 19.0) rotate(-17)"/>
<rect x="-2.7" y="-1.6" width="5.4" height="3.1" transform="translate(146.2 23.4) rotate(-17)"/>
<rect x="-2.0" y="-1.6" width="3.9" height="3.2" transform="translate(146.8 27.8) rotate(-17)"/>
<rect x="-2.7" y="-2.1" width="5.3" height="4.1" transform="translate(151.2 39.2) rotate(-17)"/>
<rect x="-2.2" y="-2.1" width="4.4" height="4.2" transform="translate(153.9 49.3) rotate(-17)"/>
<rect x="-1.9" y="-1.6" width="3.8" height="3.2" transform="translate(154.6 54.7) rotate(-17)"/>
<rect x="-2.5" y="-1.8" width="5.1" height="3.6" transform="translate(155.7 59.2) rotate(73)"/>
<rect x="-2.7" y="-1.8" width="5.3" height="3.6" transform="translate(157.7 65.4) rotate(-17)"/>
<rect x="-2.0" y="-1.7" width="4.0" height="3.4" transform="translate(160.6 70.1) rotate(-17)"/>
<rect x="-2.2" y="-2.1" width="4.5" height="4.1" transform="translate(161.8 74.1) rotate(-17)"/>
<rect x="-1.8" y="-1.9" width="3.6" height="3.7" transform="translate(162.2 80.8) rotate(-17)"/>
<rect x="-2.2" y="-1.9" width="4.5" height="3.9" transform="translate(164.3 84.6) rotate(-17)"/>
<rect x="-2.3" y="-1.7" width="4.5" height="3.4" transform="translate(166.6 95.3) rotate(73)"/>
<rect x="-2.6" y="-1.9" width="5.2" height="3.7" transform="translate(168.5 101.2) rotate(-17)"/>
<rect x="-2.1" y="-1.6" width="4.1" height="3.2" transform="translate(172.9 110.9) rotate(-22)"/>
<rect x="-2.1" y="-1.9" width="4.2" height="3.8" transform="translate(173.2 116.8) rotate(73)"/>
<rect x="-2.9" y="-2.1" width="5.8" height="4.2" transform="translate(175.1 121.4) rotate(-12)"/>
<rect x="-2.3" y="-2.0" width="4.5" height="4.0" transform="translate(177.7 126.9) rotate(-17)"/>
<rect x="-2.6" y="-1.9" width="5.2" height="3.7" transform="translate(179.3 136.4) rotate(73)"/>
<rect x="-2.1" y="-1.9" width="4.3" height="3.9" transform="translate(181.8 142.4) rotate(-17)"/>
<rect x="-2.7" y="-2.0" width="5.5" height="4.0" transform="translate(183.5 146.5) rotate(-17)"/>
<rect x="-2.5" y="-2.1" width="4.9" height="4.2" transform="translate(185.5 152.0) rotate(-17)"/>
<rect x="-2.5" y="-2.1" width="4.9" height="4.2" transform="translate(185.5 157.2) rotate(73)"/>
<rect x="-2.4" y="-1.9" width="4.7" height="3.8" transform="translate(191.8 173.6) rotate(-17)"/>
<rect x="-2.6" y="-2.2" width="5.1" height="4.3" transform="translate(193.9 177.6) rotate(-10)"/>
<rect x="-1.8" y="-1.9" width="3.6" height="3.7" transform="translate(195.7 183.7) rotate(-17)"/>
<rect x="-2.3" y="-2.1" width="4.6" height="4.2" transform="translate(197.0 188.4) rotate(73)"/>
<rect x="-2.7" y="-1.6" width="5.4" height="3.3" transform="translate(199.3 198.6) rotate(-17)"/>
<rect x="-2.7" y="-1.4" width="5.5" height="2.9" transform="translate(200.1 203.8) rotate(-12)"/>
<rect x="-2.1" y="-1.5" width="4.2" height="3.0" transform="translate(202.8 208.9) rotate(-20)"/>
<rect x="-2.0" y="-2.0" width="4.1" height="4.0" transform="translate(203.7 215.3) rotate(-17)"/>
<rect x="-2.4" y="-1.5" width="4.9" height="2.9" transform="translate(216.0 250.7) rotate(-17)"/>
<rect x="-2.5" y="-1.8" width="5.0" height="3.7" transform="translate(216.1 255.3) rotate(-17)"/>
<rect x="-1.7" y="-1.8" width="3.4" height="3.6" transform="translate(219.6 266.2) rotate(-17)"/>
<rect x="-2.7" y="-1.6" width="5.5" height="3.2" transform="translate(222.0 271.0) rotate(-17)"/>
<rect x="-2.6" y="-1.5" width="5.1" height="3.0" transform="translate(222.0 276.8) rotate(-17)"/>
<rect x="-2.6" y="-2.0" width="5.3" height="4.0" transform="translate(148.0 6.0) rotate(-17)"/>
<rect x="-2.0" y="-1.8" width="4.0" height="3.6" transform="translate(150.1 16.3) rotate(-17)"/>
<rect x="-1.7" y="-1.7" width="3.5" height="3.4" transform="translate(150.9 21.3) rotate(-18)"/>
<rect x="-2.7" y="-1.8" width="5.4" height="3.5" transform="translate(160.3 46.5) rotate(73)"/>
<rect x="-1.8" y="-2.1" width="3.6" height="4.1" transform="translate(162.0 52.9) rotate(73)"/>
<rect x="-1.9" y="-2.0" width="3.7" height="4.0" transform="translate(164.5 62.2) rotate(-17)"/>
<rect x="-2.4" y="-2.2" width="4.9" height="4.3" transform="translate(165.9 67.1) rotate(-13)"/>
<rect x="-2.6" y="-2.1" width="5.2" height="4.2" transform="translate(169.2 78.1) rotate(-17)"/>
<rect x="-2.0" y="-1.7" width="4.0" height="3.5" transform="translate(170.1 82.7) rotate(73)"/>
<rect x="-3.0" y="-1.9" width="5.9" height="3.7" transform="translate(172.5 89.0) rotate(-10)"/>
<rect x="-2.1" y="-1.4" width="4.1" height="2.9" transform="translate(174.4 94.1) rotate(-17)"/>
<rect x="-1.7" y="-1.6" width="3.4" height="3.2" transform="translate(174.4 99.9) rotate(-17)"/>
<rect x="-2.6" y="-1.5" width="5.2" height="3.0" transform="translate(181.3 118.9) rotate(73)"/>
<rect x="-2.6" y="-1.4" width="5.1" height="2.8" transform="translate(182.2 125.2) rotate(-17)"/>
<rect x="-2.0" y="-1.9" width="4.0" height="3.9" transform="translate(185.5 129.4) rotate(73)"/>
<rect x="-2.7" y="-1.9" width="5.4" height="3.9" transform="translate(188.8 140.4) rotate(73)"/>
<rect x="-2.6" y="-1.9" width="5.2" height="3.9" transform="translate(189.8 146.0) rotate(-13)"/>
<rect x="-2.1" y="-1.5" width="4.2" height="2.9" transform="translate(193.4 154.6) rotate(-15)"/>
<rect x="-2.8" y="-1.9" width="5.6" height="3.8" transform="translate(196.4 171.1) rotate(-17)"/>
<rect x="-2.7" y="-1.9" width="5.3" height="3.8" transform="translate(198.2 176.4) rotate(73)"/>
<rect x="-2.7" y="-1.7" width="5.3" height="3.5" transform="translate(201.5 186.9) rotate(-10)"/>
<rect x="-2.1" y="-1.5" width="4.2" height="3.1" transform="translate(213.8 222.8) rotate(-17)"/>
<rect x="-2.6" y="-2.1" width="5.1" height="4.2" transform="translate(213.8 228.5) rotate(73)"/>
<rect x="-3.0" y="-1.5" width="6.0" height="3.0" transform="translate(220.7 243.8) rotate(-17)"/>
<rect x="-2.8" y="-1.6" width="5.6" height="3.2" transform="translate(220.5 249.4) rotate(-14)"/>
<rect x="-1.7" y="-1.6" width="3.4" height="3.2" transform="translate(223.3 253.1) rotate(-19)"/>
<rect x="-1.8" y="-1.5" width="3.6" height="2.9" transform="translate(225.5 263.4) rotate(-17)"/>
<rect x="-2.9" y="-2.2" width="5.8" height="4.4" transform="translate(227.5 269.8) rotate(-18)"/>
<rect x="-2.8" y="-1.7" width="5.6" height="3.5" transform="translate(229.5 274.5) rotate(-17)"/>
<rect x="-2.5" y="-1.6" width="5.0" height="3.2" transform="translate(151.9 5.2) rotate(-17)"/>
<rect x="-2.3" y="-1.5" width="4.5" height="2.9" transform="translate(153.7 9.4) rotate(-11)"/>
<rect x="-2.4" y="-2.1" width="4.9" height="4.2" transform="translate(158.4 18.6) rotate(-17)"/>
<rect x="-2.8" y="-2.0" width="5.6" height="4.1" transform="translate(161.4 35.9) rotate(-17)"/>
<rect x="-1.7" y="-1.9" width="3.4" height="3.9" transform="translate(163.4 40.4) rotate(73)"/>
<rect x="-2.1" y="-1.7" width="4.1" height="3.4" transform="translate(164.8 45.4) rotate(-17)"/>
<rect x="-2.2" y="-1.7" width="4.4" height="3.4" transform="translate(167.9 51.1) rotate(-15)"/>
<rect x="-1.8" y="-1.9" width="3.5" height="3.8" transform="translate(169.6 61.2) rotate(-17)"/>
<rect x="-1.8" y="-1.7" width="3.6" height="3.4" transform="translate(172.5 65.1) rotate(-21)"/>
<rect x="-2.2" y="-2.1" width="4.4" height="4.3" transform="translate(173.8 71.0) rotate(-17)"/>
<rect x="-1.9" y="-1.9" width="3.8" height="3.8" transform="translate(174.9 76.3) rotate(-17)"/>
<rect x="-2.4" y="-1.8" width="4.9" height="3.6" transform="translate(177.1 81.7) rotate(-17)"/>
<rect x="-2.5" y="-1.4" width="5.0" height="2.9" transform="translate(178.5 86.2) rotate(-17)"/>
<rect x="-2.5" y="-1.7" width="5.1" height="3.5" transform="translate(180.0 92.0) rotate(73)"/>
<rect x="-1.8" y="-2.1" width="3.6" height="4.1" transform="translate(184.3 107.5) rotate(-17)"/>
<rect x="-1.8" y="-1.8" width="3.6" height="3.6" transform="translate(186.1 112.4) rotate(-17)"/>
<rect x="-1.9" y="-2.0" width="3.8" height="4.1" transform="translate(190.0 122.2) rotate(-17)"/>
<rect x="-2.5" y="-2.1" width="4.9" height="4.2" transform="translate(189.6 128.0) rotate(-17)"/>
<rect x="-2.6" y="-1.4" width="5.3" height="2.8" transform="translate(192.1 132.6) rotate(-17)"/>
<rect x="-2.9" y="-1.9" width="5.9" height="3.9" transform="translate(192.5 138.0) rotate(-17)"/>
<rect x="-1.9" y="-1.6" width="3.8" height="3.1" transform="translate(197.0 148.5) rotate(-18)"/>
<rect x="-2.1" y="-1.6" width="4.3" height="3.2" transform="translate(197.7 154.0) rotate(-17)"/>
<rect x="-3.0" y="-1.7" width="5.9" height="3.5" transform="translate(200.1 159.0) rotate(-25)"/>
<rect x="-2.2" y="-2.1" width="4.4" height="4.1" transform="translate(202.7 169.6) rotate(73)"/>
<rect x="-2.1" y="-2.0" width="4.3" height="4.0" transform="translate(203.8 174.8) rotate(73)"/>
<rect x="-2.4" y="-1.8" width="4.8" height="3.6" transform="translate(205.7 180.0) rotate(-17)"/>
<rect x="-2.2" y="-1.9" width="4.5" height="3.8" transform="translate(209.2 184.8) rotate(73)"/>
<rect x="-2.1" y="-1.4" width="4.2" height="2.9" transform="translate(214.9 205.8) rotate(73)"/>
<rect x="-1.7" y="-1.7" width="3.4" height="3.5" transform="translate(215.1 210.8) rotate(73)"/>
<rect x="-2.6" y="-1.5" width="5.3" height="2.9" transform="translate(218.0 214.9) rotate(-17)"/>
<rect x="-2.1" y="-2.1" width="4.2" height="4.2" transform="translate(217.8 221.0) rotate(-13)"/>
<rect x="-2.4" y="-1.7" width="4.7" height="3.5" transform="translate(219.6 225.9) rotate(-12)"/>
<rect x="-2.5" y="-1.6" width="4.9" height="3.2" transform="translate(222.8 231.4) rotate(73)"/>
<rect x="-1.7" y="-2.0" width="3.4" height="3.9" transform="translate(226.4 241.5) rotate(-17)"/>
<rect x="-2.8" y="-1.9" width="5.5" height="3.8" transform="translate(226.3 247.0) rotate(-17)"/>
<rect x="-2.1" y="-2.0" width="4.3" height="4.0" transform="translate(228.3 251.6) rotate(73)"/>
<rect x="-2.8" y="-1.8" width="5.6" height="3.6" transform="translate(234.2 266.9) rotate(73)"/>
<rect x="-1.8" y="-1.8" width="3.6" height="3.6" transform="translate(235.8 277.7) rotate(-17)"/>
<rect x="-2.4" y="-1.6" width="4.8" height="3.2" transform="translate(159.8 1.6) rotate(-22)"/>
<rect x="-1.9" y="-1.4" width="3.8" height="2.9" transform="translate(163.1 12.9) rotate(-17)"/>
<rect x="-2.6" y="-1.4" width="5.2" height="2.8" transform="translate(163.4 18.6) rotate(73)"/>
<rect x="-2.8" y="-1.6" width="5.5" height="3.2" transform="translate(167.7 33.0) rotate(-17)"/>
<rect x="-1.7" y="-1.9" width="3.5" height="3.9" transform="translate(172.1 44.1) rotate(73)"/>
<rect x="-1.9" y="-2.0" width="3.8" height="3.9" transform="translate(175.0 54.5) rotate(-17)"/>
<rect x="-2.1" y="-1.8" width="4.3" height="3.6" transform="translate(177.5 59.4) rotate(73)"/>
<rect x="-2.1" y="-1.7" width="4.3" height="3.4" transform="translate(177.7 64.3) rotate(-15)"/>
<rect x="-2.8" y="-2.0" width="5.7" height="4.0" transform="translate(179.0 69.8) rotate(73)"/>
<rect x="-2.0" y="-1.9" width="4.0" height="3.8" transform="translate(182.0 74.4) rotate(-17)"/>
<rect x="-2.3" y="-1.4" width="4.7" height="2.9" transform="translate(183.5 79.4) rotate(-17)"/>
<rect x="-2.8" y="-1.7" width="5.5" height="3.4" transform="translate(184.3 89.7) rotate(-18)"/>
<rect x="-2.3" y="-1.4" width="4.7" height="2.8" transform="translate(190.2 105.7) rotate(-15)"/>
<rect x="-2.9" y="-1.8" width="5.9" height="3.6" transform="translate(192.9 115.7) rotate(-17)"/>
<rect x="-2.8" y="-2.2" width="5.6" height="4.3" transform="translate(194.7 121.3) rotate(-17)"/>
<rect x="-2.0" y="-1.7" width="4.1" height="3.4" transform="translate(198.7 130.6) rotate(-19)"/>
<rect x="-2.6" y="-1.5" width="5.1" height="3.0" transform="translate(202.3 141.3) rotate(-17)"/>
<rect x="-2.1" y="-1.6" width="4.3" height="3.2" transform="translate(203.2 146.2) rotate(-17)"/>
<rect x="-2.9" y="-1.6" width="5.8" height="3.3" transform="translate(204.7 152.2) rotate(-17)"/>
<rect x="-2.8" y="-1.7" width="5.5" height="3.5" transform="translate(205.3 157.8) rotate(-16)"/>
<rect x="-3.0" y="-1.9" width="5.9" height="3.8" transform="translate(211.0 173.3) rotate(-17)"/>
<rect x="-1.7" y="-1.5" width="3.5" height="3.1" transform="translate(216.7 193.8) rotate(-17)"/>
<rect x="-1.8" y="-1.8" width="3.6" height="3.6" transform="translate(219.7 203.0) rotate(-17)"/>
<rect x="-1.8" y="-1.6" width="3.5" height="3.2" transform="translate(222.5 208.8) rotate(-23)"/>
<rect x="-1.9" y="-2.1" width="3.8" height="4.2" transform="translate(223.5 213.4) rotate(-15)"/>
<rect x="-2.1" y="-1.9" width="4.2" height="3.8" transform="translate(226.2 219.2) rotate(73)"/>
<rect x="-2.8" y="-2.0" width="5.7" height="3.9" transform="translate(231.7 240.4) rotate(73)"/>
<rect x="-2.7" y="-2.0" width="5.5" height="4.0" transform="translate(232.3 245.1) rotate(73)"/>
<rect x="-2.7" y="-1.9" width="5.4" height="3.8" transform="translate(235.1 249.6) rotate(-17)"/>
<rect x="-2.9" y="-1.9" width="5.8" height="3.8" transform="translate(236.2 255.2) rotate(-17)"/>
<rect x="-2.7" y="-1.7" width="5.5" height="3.4" transform="translate(241.1 270.2) rotate(-19)"/>
<rect x="-2.8" y="-1.5" width="5.6" height="3.1" transform="translate(166.1 4.9) rotate(-17)"/>
<rect x="-2.3" y="-1.6" width="4.6" height="3.1" transform="translate(169.5 16.4) rotate(-11)"/>
<rect x="-2.1" y="-1.5" width="4.2" height="2.9" transform="translate(177.3 42.5) rotate(73)"/>
<rect x="-2.2" y="-1.8" width="4.3" height="3.6" transform="translate(207.4 139.5) rotate(-17)"/>
<rect x="-2.4" y="-1.5" width="4.9" height="3.1" transform="translate(208.0 144.6) rotate(73)"/>
<rect x="-1.7" y="-1.7" width="3.4" height="3.3" transform="translate(209.3 149.8) rotate(-17)"/>
<rect x="-1.9" y="-1.7" width="3.7" height="3.3" transform="translate(211.7 154.8) rotate(-17)"/>
<rect x="-2.6" y="-1.8" width="5.3" height="3.6" transform="translate(212.7 160.4) rotate(-17)"/>
<rect x="-2.7" y="-1.5" width="5.4" height="3.0" transform="translate(215.7 170.7) rotate(-15)"/>
<rect x="-1.9" y="-2.2" width="3.8" height="4.4" transform="translate(222.4 185.7) rotate(73)"/>
<rect x="-1.9" y="-2.1" width="3.9" height="4.2" transform="translate(224.2 191.1) rotate(-17)"/>
<rect x="-2.7" y="-2.1" width="5.5" height="4.1" transform="translate(228.2 206.8) rotate(-17)"/>
<rect x="-1.8" y="-1.9" width="3.5" height="3.9" transform="translate(229.6 211.4) rotate(-17)"/>
<rect x="-1.7" y="-2.1" width="3.4" height="4.2" transform="translate(232.1 217.0) rotate(73)"/>
<rect x="-2.4" y="-1.5" width="4.8" height="3.0" transform="translate(235.2 227.8) rotate(-16)"/>
<rect x="-2.8" y="-2.0" width="5.7" height="3.9" transform="translate(238.9 242.7) rotate(-17)"/>
<rect x="-3.0" y="-2.2" width="6.0" height="4.3" transform="translate(239.3 248.0) rotate(73)"/>
<rect x="-1.9" y="-1.7" width="3.8" height="3.4" transform="translate(241.9 254.0) rotate(-21)"/>
<rect x="-2.6" y="-1.4" width="5.1" height="2.9" transform="translate(247.6 268.5) rotate(-17)"/>
<rect x="-1.8" y="-1.6" width="3.6" height="3.2" transform="translate(247.9 273.8) rotate(-17)"/>
<rect x="-2.0" y="-1.6" width="4.0" height="3.2" transform="translate(190.9 60.1) rotate(-17)"/>
<rect x="-2.8" y="-1.6" width="5.6" height="3.2" transform="translate(196.9 81.6) rotate(-10)"/>
<rect x="-2.4" y="-1.6" width="4.9" height="3.1" transform="translate(198.3 85.5) rotate(-12)"/>
<rect x="-1.7" y="-2.1" width="3.5" height="4.2" transform="translate(202.3 102.1) rotate(-17)"/>
<rect x="-3.0" y="-1.5" width="6.0" height="3.0" transform="translate(215.1 143.7) rotate(-17)"/>
<rect x="-1.7" y="-1.7" width="3.4" height="3.3" transform="translate(216.2 149.1) rotate(-17)"/>
<rect x="-1.7" y="-2.1" width="3.5" height="4.3" transform="translate(219.4 153.5) rotate(73)"/>
<rect x="-2.5" y="-2.0" width="5.1" height="4.0" transform="translate(220.7 158.3) rotate(-19)"/>
<rect x="-2.4" y="-2.0" width="4.9" height="3.9" transform="translate(226.4 178.4) rotate(-17)"/>
<rect x="-2.9" y="-1.4" width="5.9" height="2.9" transform="translate(228.6 184.7) rotate(73)"/>
<rect x="-2.9" y="-2.0" width="5.8" height="3.9" transform="translate(230.1 190.2) rotate(73)"/>
<rect x="-1.9" y="-1.5" width="3.8" height="3.1" transform="translate(230.6 195.4) rotate(73)"/>
<rect x="-2.2" y="-1.8" width="4.4" height="3.7" transform="translate(234.1 204.6) rotate(73)"/>
<rect x="-2.1" y="-1.9" width="4.1" height="3.7" transform="translate(237.8 215.7) rotate(-17)"/>
<rect x="-2.5" y="-1.9" width="5.0" height="3.7" transform="translate(240.8 225.0) rotate(73)"/>
<rect x="-2.1" y="-1.9" width="4.1" height="3.7" transform="translate(242.0 231.0) rotate(-17)"/>
<rect x="-2.1" y="-2.1" width="4.1" height="4.3" transform="translate(245.0 242.1) rotate(-17)"/>
<rect x="-2.8" y="-1.8" width="5.6" height="3.5" transform="translate(246.5 246.5) rotate(-17)"/>
<rect x="-3.0" y="-1.7" width="5.9" height="3.3" transform="translate(252.1 266.5) rotate(-20)"/>
<rect x="-2.8" y="-1.8" width="5.7" height="3.6" transform="translate(255.5 271.2) rotate(73)"/>
<rect x="-3.0" y="-1.7" width="5.9" height="3.3" transform="translate(256.3 277.9) rotate(73)"/>
<rect x="-2.1" y="-1.5" width="4.2" height="2.9" transform="translate(177.5 1.7) rotate(73)"/>
<rect x="-2.4" y="-1.8" width="4.7" height="3.6" transform="translate(180.3 7.0) rotate(-24)"/>
<rect x="-1.9" y="-1.5" width="3.7" height="3.0" transform="translate(182.7 12.6) rotate(-17)"/>
<rect x="-2.1" y="-2.0" width="4.3" height="3.9" transform="translate(183.5 17.0) rotate(-9)"/>
<rect x="-1.8" y="-1.9" width="3.6" height="3.8" transform="translate(185.0 22.8) rotate(-17)"/>
<rect x="-2.4" y="-1.8" width="4.8" height="3.6" transform="translate(186.6 28.4) rotate(-20)"/>
<rect x="-2.8" y="-1.9" width="5.5" height="3.7" transform="translate(189.0 32.6) rotate(-17)"/>
<rect x="-1.9" y="-1.6" width="3.9" height="3.2" transform="translate(192.4 49.0) rotate(-17)"/>
<rect x="-2.3" y="-1.9" width="4.7" height="3.7" transform="translate(193.7 54.3) rotate(-17)"/>
<rect x="-2.9" y="-2.2" width="5.7" height="4.3" transform="translate(195.5 58.6) rotate(-17)"/>
<rect x="-2.2" y="-1.4" width="4.4" height="2.8" transform="translate(198.2 63.7) rotate(73)"/>
<rect x="-2.8" y="-2.2" width="5.6" height="4.3" transform="translate(198.8 68.5) rotate(-24)"/>
<rect x="-1.9" y="-1.9" width="3.9" height="3.9" transform="translate(199.6 73.7) rotate(-17)"/>
<rect x="-1.7" y="-1.6" width="3.4" height="3.3" transform="translate(202.8 78.7) rotate(73)"/>
<rect x="-1.8" y="-1.9" width="3.6" height="3.9" transform="translate(202.8 84.7) rotate(-17)"/>
<rect x="-2.5" y="-1.8" width="5.0" height="3.6" transform="translate(206.5 90.2) rotate(-17)"/>
<rect x="-2.6" y="-1.7" width="5.2" height="3.4" transform="translate(206.9 94.5) rotate(-17)"/>
<rect x="-2.7" y="-1.6" width="5.4" height="3.3" transform="translate(209.1 99.1) rotate(-17)"/>
<rect x="-2.2" y="-1.7" width="4.4" height="3.4" transform="translate(209.8 104.8) rotate(-17)"/>
<rect x="-1.7" y="-1.5" width="3.5" height="3.1" transform="translate(210.6 109.9) rotate(-17)"/>
<rect x="-2.9" y="-1.9" width="5.7" height="3.7" transform="translate(213.3 116.0) rotate(-17)"/>
<rect x="-2.1" y="-1.7" width="4.3" height="3.3" transform="translate(215.0 120.1) rotate(73)"/>
<rect x="-2.9" y="-1.7" width="5.8" height="3.4" transform="translate(217.1 124.8) rotate(-17)"/>
<rect x="-1.8" y="-2.0" width="3.6" height="4.1" transform="translate(230.4 172.9) rotate(-17)"/>
<rect x="-1.9" y="-1.9" width="3.9" height="3.8" transform="translate(232.9 177.2) rotate(-23)"/>
<rect x="-1.8" y="-2.0" width="3.7" height="4.0" transform="translate(234.4 182.7) rotate(-17)"/>
<rect x="-2.2" y="-1.4" width="4.5" height="2.8" transform="translate(234.5 188.0) rotate(-17)"/>
<rect x="-1.8" y="-2.1" width="3.6" height="4.2" transform="translate(243.1 213.3) rotate(-17)"/>
<rect x="-1.9" y="-2.2" width="3.8" height="4.3" transform="translate(247.3 224.1) rotate(-17)"/>
<rect x="-2.2" y="-1.7" width="4.3" height="3.3" transform="translate(246.9 228.7) rotate(-15)"/>
<rect x="-2.1" y="-1.8" width="4.2" height="3.5" transform="translate(250.1 239.5) rotate(-17)"/>
<rect x="-1.9" y="-1.6" width="3.9" height="3.3" transform="translate(253.5 243.6) rotate(73)"/>
<rect x="-2.6" y="-1.5" width="5.2" height="3.0" transform="translate(254.4 249.3) rotate(-16)"/>
<rect x="-2.0" y="-1.9" width="4.0" height="3.7" transform="translate(261.3 270.6) rotate(73)"/>
<rect x="-1.9" y="-2.2" width="3.9" height="4.4" transform="translate(186.3 4.4) rotate(73)"/>
<rect x="-2.8" y="-2.0" width="5.6" height="4.1" transform="translate(187.1 10.7) rotate(-14)"/>
<rect x="-2.1" y="-1.9" width="4.3" height="3.7" transform="translate(190.4 15.5) rotate(-17)"/>
<rect x="-2.5" y="-1.6" width="4.9" height="3.2" transform="translate(190.6 21.0) rotate(-17)"/>
<rect x="-2.8" y="-2.2" width="5.5" height="4.3" transform="translate(195.7 36.2) rotate(-17)"/>
<rect x="-2.4" y="-2.1" width="4.8" height="4.3" transform="translate(198.1 41.4) rotate(-22)"/>
<rect x="-2.2" y="-1.5" width="4.3" height="3.0" transform="translate(199.6 46.7) rotate(-17)"/>
<rect x="-2.3" y="-1.9" width="4.5" height="3.8" transform="translate(201.4 56.3) rotate(-17)"/>
<rect x="-2.8" y="-1.7" width="5.6" height="3.3" transform="translate(204.2 61.9) rotate(-17)"/>
<rect x="-2.3" y="-1.7" width="4.7" height="3.4" transform="translate(204.9 68.0) rotate(73)"/>
<rect x="-2.4" y="-1.8" width="4.8" height="3.5" transform="translate(206.9 72.1) rotate(-17)"/>
<rect x="-2.7" y="-2.0" width="5.4" height="4.0" transform="translate(206.9 77.2) rotate(-17)"/>
<rect x="-2.7" y="-1.6" width="5.4" height="3.3" transform="translate(209.7 83.0) rotate(73)"/>
<rect x="-2.7" y="-2.1" width="5.4" height="4.1" transform="translate(211.1 87.7) rotate(-17)"/>
<rect x="-1.9" y="-2.1" width="3.8" height="4.3" transform="translate(213.1 92.5) rotate(-18)"/>
<rect x="-2.0" y="-1.5" width="4.0" height="3.0" transform="translate(215.7 98.0) rotate(73)"/>
<rect x="-2.0" y="-2.1" width="4.1" height="4.2" transform="translate(216.3 103.6) rotate(-17)"/>
<rect x="-1.7" y="-2.1" width="3.5" height="4.2" transform="translate(216.5 108.4) rotate(-17)"/>
<rect x="-1.7" y="-2.0" width="3.5" height="4.0" transform="translate(219.0 114.4) rotate(-23)"/>
<rect x="-2.1" y="-1.5" width="4.2" height="3.1" transform="translate(220.0 118.4) rotate(-22)"/>
<rect x="-2.0" y="-1.6" width="4.0" height="3.2" transform="translate(222.9 129.4) rotate(73)"/>
<rect x="-2.1" y="-1.9" width="4.3" height="3.8" transform="translate(228.2 139.2) rotate(-17)"/>
<rect x="-2.7" y="-1.6" width="5.4" height="3.3" transform="translate(231.0 150.4) rotate(-17)"/>
<rect x="-2.3" y="-2.1" width="4.6" height="4.1" transform="translate(233.2 160.4) rotate(-17)"/>
<rect x="-2.9" y="-1.7" width="5.7" height="3.4" transform="translate(238.6 175.7) rotate(-17)"/>
<rect x="-2.0" y="-2.2" width="4.0" height="4.3" transform="translate(240.7 180.4) rotate(73)"/>
<rect x="-3.0" y="-1.6" width="5.9" height="3.2" transform="translate(240.1 185.7) rotate(-17)"/>
<rect x="-2.5" y="-1.5" width="5.1" height="3.0" transform="translate(242.0 191.0) rotate(-17)"/>
<rect x="-2.6" y="-2.0" width="5.2" height="4.0" transform="translate(244.0 197.1) rotate(-12)"/>
<rect x="-2.8" y="-1.4" width="5.5" height="2.9" transform="translate(249.7 212.0) rotate(73)"/>
<rect x="-2.8" y="-1.6" width="5.6" height="3.1" transform="translate(251.7 216.3) rotate(73)"/>
<rect x="-2.3" y="-2.1" width="4.6" height="4.2" transform="translate(252.2 221.9) rotate(-17)"/>
<rect x="-2.1" y="-1.5" width="4.2" height="3.1" transform="translate(258.2 242.9) rotate(-17)"/>
<rect x="-2.3" y="-1.8" width="4.6" height="3.5" transform="translate(260.6 248.1) rotate(-17)"/>
<rect x="-2.0" y="-1.8" width="4.0" height="3.6" transform="translate(262.2 252.8) rotate(-18)"/>
<rect x="-2.9" y="-2.1" width="5.9" height="4.2" transform="translate(191.7 3.8) rotate(-17)"/>
<rect x="-2.0" y="-1.7" width="4.0" height="3.4" transform="translate(192.8 9.5) rotate(-17)"/>
<rect x="-2.7" y="-1.5" width="5.4" height="3.0" transform="translate(196.1 14.0) rotate(-17)"/>
<rect x="-1.9" y="-1.8" width="3.7" height="3.7" transform="translate(196.0 19.1) rotate(-13)"/>
<rect x="-2.6" y="-1.7" width="5.1" height="3.4" transform="translate(197.4 24.8) rotate(-17)"/>
<rect x="-1.8" y="-1.7" width="3.6" height="3.3" transform="translate(199.0 29.9) rotate(-17)"/>
<rect x="-2.6" y="-2.1" width="5.2" height="4.1" transform="translate(202.4 34.8) rotate(-17)"/>
<rect x="-2.6" y="-1.8" width="5.2" height="3.6" transform="translate(202.9 39.0) rotate(-17)"/>
<rect x="-2.8" y="-1.7" width="5.6" height="3.3" transform="translate(205.0 44.9) rotate(73)"/>
<rect x="-2.2" y="-2.0" width="4.4" height="4.0" transform="translate(207.0 48.9) rotate(-17)"/>
<rect x="-2.8" y="-1.9" width="5.6" height="3.8" transform="translate(208.9 59.6) rotate(-17)"/>
<rect x="-2.4" y="-1.9" width="4.9" height="3.7" transform="translate(211.1 64.6) rotate(-17)"/>
<rect x="-2.5" y="-2.0" width="5.0" height="4.1" transform="translate(211.9 71.5) rotate(-17)"/>
<rect x="-2.3" y="-2.1" width="4.5" height="4.1" transform="translate(215.0 75.5) rotate(73)"/>
<rect x="-2.3" y="-2.1" width="4.6" height="4.2" transform="translate(216.4 80.8) rotate(-11)"/>
<rect x="-1.9" y="-1.7" width="3.9" height="3.4" transform="translate(218.5 85.9) rotate(-17)"/>
<rect x="-2.6" y="-1.7" width="5.2" height="3.3" transform="translate(220.1 91.2) rotate(-17)"/>
<rect x="-1.9" y="-2.0" width="3.7" height="4.0" transform="translate(224.2 106.9) rotate(-17)"/>
<rect x="-2.5" y="-1.8" width="4.9" height="3.7" transform="translate(225.4 112.1) rotate(-17)"/>
<rect x="-2.5" y="-1.7" width="5.0" height="3.3" transform="translate(226.8 116.4) rotate(-17)"/>
<rect x="-2.0" y="-2.0" width="4.1" height="4.0" transform="translate(229.0 121.3) rotate(-17)"/>
<rect x="-3.0" y="-2.0" width="5.9" height="3.9" transform="translate(231.2 127.8) rotate(-17)"/>
<rect x="-2.6" y="-1.4" width="5.2" height="2.9" transform="translate(230.4 132.6) rotate(-21)"/>
<rect x="-2.3" y="-1.8" width="4.6" height="3.7" transform="translate(232.4 138.5) rotate(-17)"/>
<rect x="-2.5" y="-1.9" width="4.9" height="3.9" transform="translate(235.6 143.3) rotate(-17)"/>
<rect x="-2.6" y="-1.6" width="5.2" height="3.1" transform="translate(235.6 148.2) rotate(73)"/>
<rect x="-2.8" y="-2.1" width="5.6" height="4.2" transform="translate(237.0 153.7) rotate(-17)"/>
<rect x="-2.3" y="-1.5" width="4.6" height="3.1" transform="translate(241.8 163.4) rotate(-17)"/>
<rect x="-1.8" y="-1.6" width="3.6" height="3.2" transform="translate(241.8 168.5) rotate(-17)"/>
<rect x="-2.3" y="-1.6" width="4.6" height="3.2" transform="translate(244.6 178.6) rotate(73)"/>
<rect x="-2.2" y="-2.1" width="4.4" height="4.1" transform="translate(247.8 184.8) rotate(-17)"/>
<rect x="-2.3" y="-1.5" width="4.7" height="3.0" transform="translate(248.8 189.8) rotate(-17)"/>
<rect x="-2.5" y="-2.0" width="5.0" height="4.1" transform="translate(251.4 194.2) rotate(-17)"/>
<rect x="-2.3" y="-2.0" width="4.7" height="4.1" transform="translate(251.0 199.7) rotate(73)"/>
<rect x="-2.3" y="-2.0" width="4.7" height="3.9" transform="translate(197.7 1.9) rotate(-17)"/>
<rect x="-2.8" y="-1.6" width="5.6" height="3.1" transform="translate(198.6 6.3) rotate(-17)"/>
<rect x="-2.3" y="-1.6" width="4.5" height="3.2" transform="translate(200.8 12.5) rotate(73)"/>
<rect x="-2.2" y="-2.1" width="4.5" height="4.2" transform="translate(203.4 22.5) rotate(-17)"/>
<rect x="-2.0" y="-1.4" width="4.0" height="2.9" transform="translate(206.3 26.6) rotate(-17)"/>
<rect x="-1.7" y="-1.9" width="3.4" height="3.7" transform="translate(207.1 32.2) rotate(-17)"/>
<rect x="-2.8" y="-2.0" width="5.6" height="3.9" transform="translate(211.3 42.0) rotate(-20)"/>
<rect x="-2.6" y="-1.5" width="5.2" height="2.9" transform="translate(211.4 47.6) rotate(-22)"/>
<rect x="-2.2" y="-1.8" width="4.3" height="3.6" transform="translate(213.5 53.0) rotate(-22)"/>
<rect x="-2.8" y="-1.4" width="5.6" height="2.9" transform="translate(215.6 58.7) rotate(73)"/>
<rect x="-2.8" y="-2.1" width="5.6" height="4.3" transform="translate(216.8 63.2) rotate(73)"/>
<rect x="-2.9" y="-2.0" width="5.7" height="3.9" transform="translate(218.8 68.3) rotate(-17)"/>
<rect x="-2.7" y="-1.7" width="5.3" height="3.4" transform="translate(219.4 74.3) rotate(73)"/>
<rect x="-2.4" y="-2.2" width="4.9" height="4.3" transform="translate(221.9 78.8) rotate(-17)"/>
<rect x="-2.3" y="-1.7" width="4.5" height="3.5" transform="translate(223.7 83.7) rotate(-17)"/>
<rect x="-1.9" y="-1.9" width="3.7" height="3.8" transform="translate(224.1 89.7) rotate(-17)"/>
<rect x="-1.9" y="-2.0" width="3.8" height="4.1" transform="translate(226.4 94.3) rotate(-17)"/>
<rect x="-2.8" y="-1.9" width="5.5" height="3.7" transform="translate(230.3 109.8) rotate(-17)"/>
<rect x="-2.6" y="-1.9" width="5.1" height="3.7" transform="translate(231.9 116.0) rotate(-17)"/>
<rect x="-2.3" y="-1.8" width="4.5" height="3.5" transform="translate(235.9 124.9) rotate(-10)"/>
<rect x="-2.5" y="-1.9" width="5.0" height="3.7" transform="translate(236.5 131.1) rotate(-17)"/>
<rect x="-2.7" y="-1.9" width="5.3" height="3.9" transform="translate(238.4 136.3) rotate(73)"/>
<rect x="-2.7" y="-1.8" width="5.3" height="3.7" transform="translate(240.4 141.3) rotate(-17)"/>
<rect x="-1.8" y="-2.1" width="3.5" height="4.3" transform="translate(244.5 151.9) rotate(-23)"/>
<rect x="-2.0" y="-1.9" width="4.0" height="3.8" transform="translate(246.8 161.6) rotate(-16)"/>
<rect x="-2.2" y="-2.1" width="4.4" height="4.3" transform="translate(206.3 5.3) rotate(-17)"/>
<rect x="-2.4" y="-1.8" width="4.8" height="3.6" transform="translate(206.6 10.7) rotate(73)"/>
<rect x="-2.8" y="-1.8" width="5.7" height="3.5" transform="translate(209.3 15.4) rotate(-14)"/>
<rect x="-2.5" y="-1.8" width="5.0" height="3.6" transform="translate(210.2 20.9) rotate(-15)"/>
<rect x="-2.2" y="-1.5" width="4.4" height="2.9" transform="translate(213.0 25.1) rotate(-17)"/>
<rect x="-3.0" y="-2.1" width="5.9" height="4.3" transform="translate(214.7 36.3) rotate(-17)"/>
<rect x="-1.8" y="-1.8" width="3.7" height="3.6" transform="translate(216.4 40.4) rotate(-19)"/>
<rect x="-1.8" y="-1.9" width="3.5" height="3.8" transform="translate(219.5 46.3) rotate(-14)"/>
<rect x="-2.7" y="-2.1" width="5.5" height="4.2" transform="translate(219.1 52.1) rotate(-17)"/>
<rect x="-2.0" y="-1.8" width="4.0" height="3.6" transform="translate(221.8 56.8) rotate(-17)"/>
<rect x="-1.8" y="-2.2" width="3.6" height="4.4" transform="translate(224.2 61.8) rotate(-17)"/>
<rect x="-2.8" y="-1.5" width="5.6" height="2.9" transform="translate(226.9 72.5) rotate(73)"/>
<rect x="-1.8" y="-1.6" width="3.7" height="3.3" transform="translate(227.8 77.5) rotate(-17)"/>
<rect x="-2.0" y="-1.9" width="4.0" height="3.8" transform="translate(229.0 82.2) rotate(-17)"/>
<rect x="-1.9" y="-1.9" width="3.8" height="3.8" transform="translate(230.8 86.9) rotate(-17)"/>
<rect x="-1.9" y="-1.9" width="3.8" height="3.8" transform="translate(233.4 92.9) rotate(-17)"/>
<rect x="-2.6" y="-2.0" width="5.1" height="4.0" transform="translate(234.5 98.0) rotate(73)"/>
<rect x="-2.7" y="-1.5" width="5.3" height="3.0" transform="translate(237.2 107.7) rotate(-17)"/>
<rect x="-2.1" y="-1.9" width="4.2" height="3.7" transform="translate(212.4 3.1) rotate(73)"/>
<rect x="-3.0" y="-2.0" width="5.9" height="4.0" transform="translate(213.4 8.8) rotate(-17)"/>
<rect x="-2.4" y="-1.9" width="4.7" height="3.8" transform="translate(216.2 13.7) rotate(73)"/>
<rect x="-3.0" y="-1.6" width="5.9" height="3.2" transform="translate(216.9 18.5) rotate(-16)"/>
<rect x="-2.8" y="-2.2" width="5.6" height="4.3" transform="translate(219.7 29.1) rotate(73)"/>
<rect x="-2.5" y="-1.5" width="5.1" height="2.9" transform="translate(222.3 34.2) rotate(-17)"/>
<rect x="-2.1" y="-2.0" width="4.2" height="4.0" transform="translate(223.5 44.0) rotate(73)"/>
<rect x="-1.8" y="-1.4" width="3.6" height="2.9" transform="translate(217.8 1.5) rotate(73)"/>
<rect x="-2.5" y="-1.6" width="5.0" height="3.3" transform="translate(218.5 6.0) rotate(-25)"/>
<rect x="-2.2" y="-1.4" width="4.4" height="2.9" transform="translate(221.9 17.1) rotate(-17)"/>
</g>
<g stroke="#efbdbb" stroke-width="0.9" fill="none" opacity="0.9">
<path d="M150 42 L228 22"/>
<path d="M152 60 L230 44"/>
<path d="M160 80 L233 62"/>
<path d="M165 98 L236 84"/>
<path d="M188 122 L240 110"/>
<path d="M178 150 L240 150"/>
<path d="M175 180 L205 178"/>
<path d="M215 212 L258 212"/>
<path d="M215 250 L262 250"/>
<path d="M180 40 L196 110"/>
<path d="M200 30 L214 100"/>
<path d="M120 120 L140 180"/>
<path d="M128 230 L160 240"/>
<path d="M118 170 L140 200"/>
<path d="M180 200 L200 240"/>
<path d="M150 200 L160 222"/>
</g>
<rect x="80" y="88" width="12" height="16" fill="#cdf5c8" transform="rotate(-15 86 96)"/>
<rect x="155" y="170" width="8" height="18" fill="#cdf5c8"/>
<path d="M118 2 L134 0 L136 14 L121 16 Z" fill="#fffbc9"/>
<path d="M106 28 L124 25 L126 38 L109 40 Z" fill="#fffbc9"/>
<rect x="125" y="14" width="11" height="9" fill="#c6b4a7"/>
<path d="M140 36 L146 36 L158 76 L170 108 L164 110 L152 78 Z" fill="#c8facc"/>
<path d="M203 141 L221 137 L222 154 L204 157 Z" fill="#fffbc9" stroke="#e6e6a0" stroke-width="0.8" opacity="0.9"/>
<path d="M205 206 L240 204 L242 214 L207 216 Z" fill="#c8facc" opacity="0.7"/>
<g stroke="#cfc9c6" stroke-width="5.0" fill="none" stroke-linecap="round" stroke-linejoin="round">
<path d="M44.0 67.0 L175.0 22.0"/>
<path d="M42.0 96.0 L140.0 69.0 L146.0 86.0 L57.0 117.0"/>
<path d="M76.0 139.0 L137.0 120.0"/>
<path d="M141.0 130.0 L161.0 122.0 L154.0 106.0 L135.0 111.0"/>
<path d="M90.0 0.0 L111.0 55.0 L139.0 139.0 L142.0 165.0"/>
<path d="M172.0 0.0 L190.0 70.0 L203.0 117.0 L224.0 139.0 L230.0 158.0 L209.0 197.0 L211.0 265.0 L213.0 278.0"/>
<path d="M70.0 0.0 L90.0 14.0 L102.0 36.0"/>
<path d="M90.0 14.0 L118.0 1.0"/>
<path d="M99.0 166.0 L230.0 164.0"/>
<path d="M108.0 194.0 L210.0 193.0"/>
<path d="M210.0 198.0 L240.0 200.0 L246.0 208.0"/>
<path d="M166.0 167.0 L167.0 278.0"/>
<path d="M34.0 278.0 L44.0 249.0 L61.0 224.0 L76.0 216.0 L110.0 216.0"/>
<path d="M51.0 278.0 L66.0 253.0 L82.0 238.0"/>
<path d="M74.0 218.0 L82.0 238.0 L95.0 259.0 L104.0 278.0"/>
<path d="M95.0 259.0 L120.0 259.0"/>
<path d="M146.0 278.0 L203.0 240.0"/>
<path d="M170.0 222.0 L203.0 222.0"/>
<path d="M211.0 235.0 L263.0 235.0"/>
<path d="M203.0 259.0 L276.0 260.0"/>
<path d="M172.0 104.0 L203.0 97.0"/>
<path d="M396 194 L390 265 L389 278 M372 180 C385 182 394 188 396 194"/>
</g>
<g stroke="#ffffff" stroke-width="3.6" fill="none" stroke-linecap="round" stroke-linejoin="round">
<path d="M44.0 67.0 L175.0 22.0"/>
<path d="M42.0 96.0 L140.0 69.0 L146.0 86.0 L57.0 117.0"/>
<path d="M76.0 139.0 L137.0 120.0"/>
<path d="M141.0 130.0 L161.0 122.0 L154.0 106.0 L135.0 111.0"/>
<path d="M90.0 0.0 L111.0 55.0 L139.0 139.0 L142.0 165.0"/>
<path d="M172.0 0.0 L190.0 70.0 L203.0 117.0 L224.0 139.0 L230.0 158.0 L209.0 197.0 L211.0 265.0 L213.0 278.0"/>
<path d="M70.0 0.0 L90.0 14.0 L102.0 36.0"/>
<path d="M90.0 14.0 L118.0 1.0"/>
<path d="M99.0 166.0 L230.0 164.0"/>
<path d="M108.0 194.0 L210.0 193.0"/>
<path d="M210.0 198.0 L240.0 200.0 L246.0 208.0"/>
<path d="M166.0 167.0 L167.0 278.0"/>
<path d="M34.0 278.0 L44.0 249.0 L61.0 224.0 L76.0 216.0 L110.0 216.0"/>
<path d="M51.0 278.0 L66.0 253.0 L82.0 238.0"/>
<path d="M74.0 218.0 L82.0 238.0 L95.0 259.0 L104.0 278.0"/>
<path d="M95.0 259.0 L120.0 259.0"/>
<path d="M146.0 278.0 L203.0 240.0"/>
<path d="M170.0 222.0 L203.0 222.0"/>
<path d="M211.0 235.0 L263.0 235.0"/>
<path d="M203.0 259.0 L276.0 260.0"/>
<path d="M172.0 104.0 L203.0 97.0"/>
<path d="M396 194 L390 265 L389 278 M372 180 C385 182 394 188 396 194"/>
</g>
<path d="M6 72 L22 139 L31 190 L9 278" stroke="#c19a4f" stroke-width="1.3" stroke-dasharray="4 2" fill="none"/>
<g stroke="#8a9a85" stroke-width="1" stroke-dasharray="3 2" fill="none"><path d="M0 162 L28 188 L60 172 L88 160"/><path d="M0 180 L31 190 L66 181"/><path d="M0 215 L20 240 L34 227"/></g>
<path d="M-2.0 25.0 L20.0 62.0 L38.0 100.0 L55.0 120.0 L71.0 139.0 L91.0 161.0 L102.0 187.0 L111.0 212.0 L128.0 244.0 L146.0 280.0" stroke="#c9975b" stroke-width="9" fill="none" stroke-linejoin="round"/>
<path d="M-2.0 25.0 L20.0 62.0 L38.0 100.0 L55.0 120.0 L71.0 139.0 L91.0 161.0 L102.0 187.0 L111.0 212.0 L128.0 244.0 L146.0 280.0" stroke="#fcd6a4" stroke-width="7" fill="none" stroke-linejoin="round"/>
<g stroke="#8f948c" stroke-width="1.1" stroke-dasharray="3 2" fill="none">
<path d="M230 5 L260 40 L285 55"/>
<path d="M248 20 L280 80 L302 120 L320 150"/>
<path d="M252 40 L268 120 L275 139 L300 145 L330 139"/>
<path d="M262 127 L278 110 L302 100"/>
<path d="M258 163 L330 165 L405 150"/>
<path d="M258 170 L405 172"/>
<path d="M292 5 L300 60 L315 115 L338 160"/>
</g>
<path d="M226.0 -2.0 L234.0 58.0 L250.0 139.0 L260.0 205.0 L271.0 265.0 L273.0 280.0" stroke="#707070" stroke-width="4.4" fill="none"/>
<path d="M226.0 -2.0 L234.0 58.0 L250.0 139.0 L260.0 205.0 L271.0 265.0 L273.0 280.0" stroke="#dcdcdc" stroke-width="1.4" stroke-dasharray="4 4" fill="none"/>
<g stroke="#c071e3" stroke-width="2" fill="none" stroke-linecap="round">
<path d="M136 0 L146 36 L158 76 L169 108 L200 100" stroke-dasharray="2.5 1"/>
<path d="M181 17 L228 16 L250 12"/>
<path d="M232 6 C245 14 258 17 270 15 C285 13 300 6 318 0" stroke-dasharray="1.2 2.6"/>
<path d="M222 10 C226 4 240 4 246 14 C244 24 232 24 228 18"/>
<path d="M231 70 L248 139 L258 200 L270 270" stroke-width="0.8"/>
<path d="M258 203 L262 187 L280 185 L298 184 L302 173 L307 168 L340 171 L367 175"/>
<path d="M262 187 L264 203 L274 219 L275 244 L280 259 L291 263 L320 265"/>
<path d="M246 208 L258 200"/>
<path d="M0 48 L2 65 L8 70"/>
<path d="M118 258 L130 258"/>
<path d="M392 108 L400 130" stroke-dasharray="2 1"/>
</g>
<rect x="0" y="70" width="405" height="0.8" fill="#f5f5f5" opacity="0.85"/>
<g font-family="Liberation Sans" fill="#2e2e2e" stroke="#ffffff" stroke-width="1.6" stroke-opacity="0.75" paint-order="stroke" stroke-linejoin="round">
<text x="197" y="36" font-size="9.5" font-weight="bold" fill="#6066c0">Fasanenpark</text>
<text x="325" y="56.5" font-size="14" letter-spacing="0.4" font-style="italic" fill="#2e9e3e" stroke-width="0">Campeon</text>
<text x="330" y="79" font-size="11.5" letter-spacing="0.3" font-style="italic" fill="#9b6565" stroke-width="0">Infineon</text>
<text x="266" y="221" font-size="8.5" font-style="italic" fill="#4a9a55" stroke-width="0">Freizeitanlage</text>
<text x="267" y="233" font-size="8.5" font-style="italic" fill="#4a9a55" stroke-width="0">Am Sportpark</text>
<text x="339" y="227" font-size="9" font-style="italic" fill="#4a9a55" stroke-width="0">Sportpark</text>
<text font-size="6.8" transform="translate(63 63) rotate(-18)">Parkstr.</text>
<text font-size="6.8" transform="translate(127 38) rotate(-18)">Parkstr.</text>
<text font-size="6.8" transform="translate(57 94) rotate(-16)">Frühlingsstr.</text>
<text font-size="6.8" transform="translate(74 114) rotate(-18)">Waldstr.</text>
<text font-size="6.8" transform="translate(86 136) rotate(-20)">Gartenstr.</text>
<text font-size="8" font-weight="bold" fill="#3a3a3a" stroke-width="0" transform="translate(33 96) rotate(53)">Münchner Str.</text>
<text font-size="6.8" transform="translate(111 58) rotate(72)">Albert-Schweitzer-Str.</text>
<text font-size="6.8" transform="translate(194 68) rotate(70)">Fasanenstr.</text>
<text font-size="8" fill="#6f7f6f" transform="translate(217 50) rotate(80)">Unterhaching</text>
<text font-size="6.8" transform="translate(42 22) rotate(38)">Ullmannsstr.</text>
<text x="137" y="168" font-size="6.8">Sommerstr.</text>
<text x="127" y="196" font-size="6.8">Karl-Mathes-Str.</text>
<text x="169" y="225" font-size="6.8">Winterstr.</text>
<text font-size="6.8" transform="translate(163 212) rotate(88)">Lohestr.</text>
<text font-size="6.8" transform="translate(148 270) rotate(-35)">Otto-von-Miller-Str.</text>
<text x="225" y="262" font-size="6.8">Mozartstr.</text>
<text font-size="9" fill="#707070" transform="translate(312 153) rotate(10)">Neubiberg</text>
<text font-size="6.8" transform="translate(15 275) rotate(-72)">Hochäckerweg</text>
</g>
<path d="M202.5 156.6 L194.25 148.16 A11.6 11.6 0 1 1 210.75 148.16 Z" fill="#f39c12" stroke="#fff" stroke-width="1.9" stroke-linejoin="miter"/>
<circle cx="202.5" cy="140" r="1.4" fill="#fff"/><circle cx="202.5" cy="161.7" r="2" fill="#f39c12"/>
</svg>
<div style="position:absolute;left:11px;top:11px;width:33px;height:63px;border:2px solid rgba(0,0,0,0.2);border-radius:4px;background-clip:padding-box"></div>
<div style="position:absolute;left:13px;top:13px;width:29px;height:29px;background:#fff;border-radius:2px 2px 0 0;border-bottom:1px solid #ccc"></div>
<div style="position:absolute;left:13px;top:42px;width:29px;height:30px;background:#fff;border-radius:0 0 2px 2px"></div>
<div style="position:absolute;left:22px;top:26.5px;width:11px;height:3px;background:#000"></div>
<div style="position:absolute;left:26px;top:22.5px;width:3px;height:11px;background:#000"></div>
<div style="position:absolute;left:22px;top:57.5px;width:11px;height:3px;background:#000"></div>
<div style="position:absolute;left:361px;top:11px;width:33px;height:33px;border:2px solid rgba(0,0,0,0.2);border-radius:4px;background:#fff;background-clip:padding-box"></div>
<svg style="position:absolute;left:371px;top:19px" width="13" height="16" viewBox="0 0 13 16"><path d="M6.5 0.5 L12.5 5 L6.5 9.5 L0.5 5 Z" fill="#333"/><path d="M0.5 8.5 L6.5 13 L12.5 8.5" stroke="#333" stroke-width="1.8" fill="none"/></svg>
<div style="position:absolute;left:154px;top:264.5px;width:251px;height:13.5px;background:rgba(255,255,255,0.8);font-size:10.7px;line-height:13.5px;color:#333;padding-left:5px;white-space:nowrap"><span style="display:inline-block;width:10px;height:7px;background:linear-gradient(#3b5bdb 50%,#ffd500 50%);vertical-align:-0px;margin-right:3px"></span><span style="color:#0078a8">Leaflet</span> <span style="color:#999">|</span> © <span style="color:#0078a8">OpenStreetMap</span> © <span style="color:#0078a8">OSM Deutschland</span></div>

</div>

<div class="a" style="left:949.5px;top:496px;width:28px;height:28px;border-radius:50%;background:#10b981"></div>
<svg class="a" style="left:955.5px;top:502px" width="16" height="16" viewBox="0 0 24 24"><path fill="#fff" d="m22.61 18.99-9.08-9.08c.93-2.34.45-5.1-1.44-7C9.79.61 6.21.4 3.66 2.26L7.5 6.11 6.08 7.52 2.25 3.69C.39 6.23.6 9.82 2.9 12.11c1.86 1.86 4.57 2.35 6.89 1.48l9.11 9.11c.39.39 1.02.39 1.41 0l2.3-2.3c.4-.38.4-1.01 0-1.41"/></svg>
<div class="a" style="left:985.5px;top:494px;font-size:14.1px;font-weight:bold;color:#1e293b">Klimaanlagenreparatur</div>
<svg class="a" style="left:985.5px;top:513.5px" width="16" height="16" viewBox="0 0 16 16"><defs><clipPath id="av"><circle cx="8" cy="8" r="8"/></clipPath></defs><g clip-path="url(#av)"><rect width="16" height="16" fill="#e6dcae"/><rect x="11" y="2" width="5" height="8" fill="#f2d27a"/><ellipse cx="8" cy="16" rx="6" ry="4" fill="#f4f0e6"/><ellipse cx="7.6" cy="7.6" rx="2.8" ry="3.4" fill="#c98f6a"/><path d="M4.8 6.2 C5 3.6 10 3.4 10.4 6 L10 5.2 L5.2 5.6 Z" fill="#6b4a36"/></g></svg>
<div class="a" style="left:1006px;top:515.7px;font-size:12.7px;color:#475569">Klaus</div>
<svg class="a" style="left:1047px;top:514px" width="10" height="14" viewBox="0 0 10 14"><rect x="4.4" y="5" width="1.2" height="9" fill="#8a8a8a"/><circle cx="5" cy="4" r="3.6" fill="#e0313b"/></svg>
<div class="a" style="left:1060px;top:515.7px;font-size:12.6px;color:#475569">Noah Müller</div>
</body></html>
